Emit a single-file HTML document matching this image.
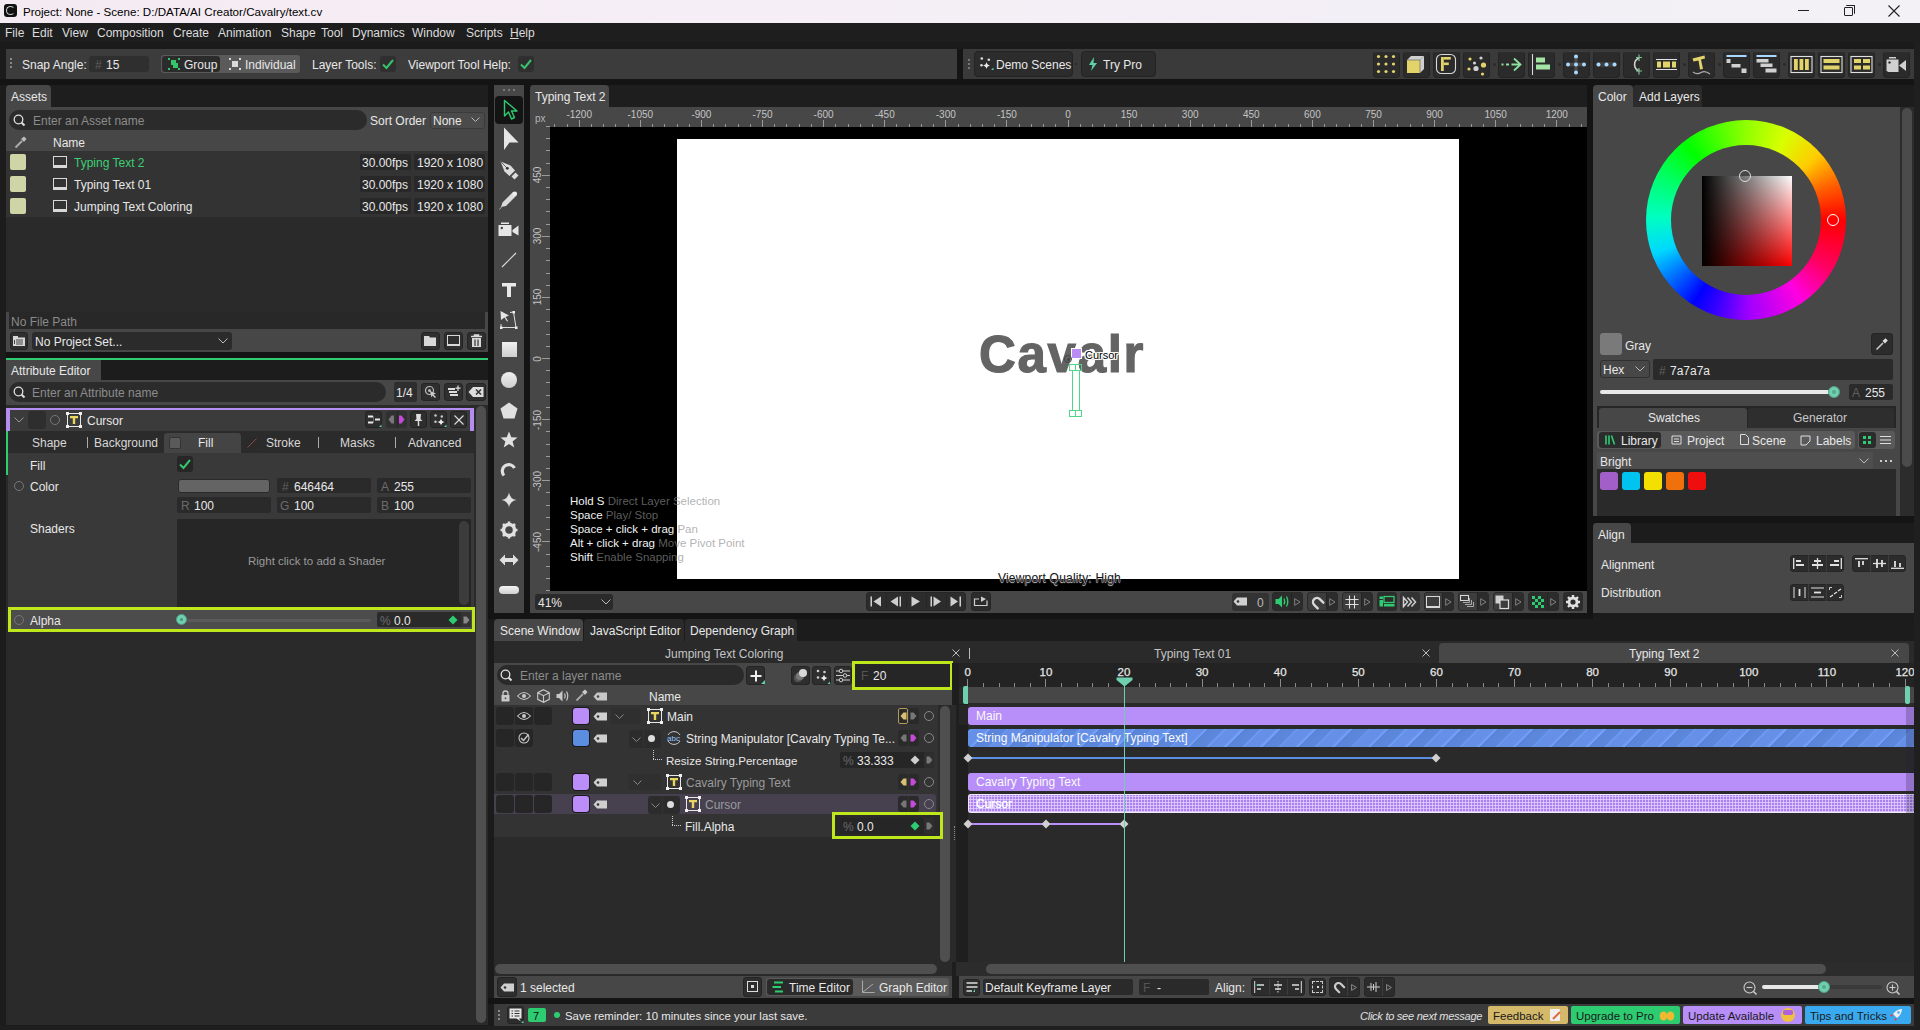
<!DOCTYPE html>
<html><head><meta charset="utf-8">
<style>
*{box-sizing:border-box;margin:0;padding:0}
html,body{width:1920px;height:1030px;overflow:hidden;background:#1b1b1b;font-family:"Liberation Sans",sans-serif;font-size:12px;color:#e6e6e6}
.a{position:absolute}
.t{position:absolute;white-space:nowrap;line-height:14px;margin-top:1px}
.dim{color:#8a8a8a}
svg{position:absolute;overflow:visible}
</style></head><body>


<!-- TITLE BAR -->
<div class="a" style="left:0;top:0;width:1920px;height:23px;background:linear-gradient(90deg,#f4eaf2 0%,#f6eef6 35%,#f3eff6 70%,#f3f0f6 100%)"></div>
<div class="a" style="left:4px;top:4px;width:13px;height:13px;background:#111;border-radius:3px"></div>
<div class="a" style="left:6px;top:6px;width:9px;height:9px;border:1.5px solid #ccc;border-right-color:transparent;border-radius:50%"></div>
<div class="t" style="left:23px;top:4px;color:#000;font-size:11.6px">Project: None - Scene: D:/DATA/AI Creator/Cavalry/text.cv</div>
<div class="a" style="left:1798px;top:10px;width:11px;height:1px;background:#222"></div>
<div class="a" style="left:1844px;top:7px;width:9px;height:9px;border:1px solid #222;border-radius:1px"></div>
<div class="a" style="left:1846px;top:5px;width:9px;height:9px;border-top:1px solid #222;border-right:1px solid #222;border-radius:1px"></div>
<svg style="left:1888px;top:5px" width="12" height="12"><path d="M0.5 0.5L11.5 11.5M11.5 0.5L0.5 11.5" stroke="#222" stroke-width="1.1"/></svg>

<!-- MENU BAR -->
<div class="a" style="left:0;top:23px;width:1920px;height:19px;background:#1e1e1e"></div>
<div class="a" style="left:0;top:42px;width:1920px;height:7px;background:#1b1b1b"></div>
<div class="t" style="left:5px;top:25px;color:#dcdcdc">File</div>
<div class="t" style="left:32px;top:25px;color:#dcdcdc">Edit</div>
<div class="t" style="left:62px;top:25px;color:#dcdcdc">View</div>
<div class="t" style="left:97px;top:25px;color:#dcdcdc">Composition</div>
<div class="t" style="left:173px;top:25px;color:#dcdcdc">Create</div>
<div class="t" style="left:218px;top:25px;color:#dcdcdc">Animation</div>
<div class="t" style="left:281px;top:25px;color:#dcdcdc">Shape</div>
<div class="t" style="left:321px;top:25px;color:#dcdcdc">Tool</div>
<div class="t" style="left:352px;top:25px;color:#dcdcdc">Dynamics</div>
<div class="t" style="left:412px;top:25px;color:#dcdcdc">Window</div>
<div class="t" style="left:466px;top:25px;color:#dcdcdc">Scripts</div>
<div class="t" style="left:510px;top:25px;color:#dcdcdc"><u>H</u>elp</div>

<!-- TOOLBAR LEFT -->
<div class="a" style="left:6px;top:49px;width:951px;height:30px;background:#3c3c3c"></div>
<div class="a" style="left:10px;top:58px;width:2px;height:2px;background:#888;box-shadow:0 4px #888,0 8px #888"></div>
<div class="t" style="left:22px;top:57px;color:#e8e8e8">Snap Angle:</div>
<div class="a" style="left:89px;top:56px;width:60px;height:16px;background:#2f2f2f;border-radius:3px"></div>
<div class="t" style="left:95px;top:57px;color:#5e5e5e">#</div>
<div class="t" style="left:106px;top:57px;color:#e8e8e8">15</div>
<div class="a" style="left:161px;top:55px;width:139px;height:18px;background:#5a5a5a;border-radius:3px"></div>
<div class="a" style="left:162px;top:56px;width:58px;height:16px;background:#2b2b2b;border-radius:3px"></div>
<div class="a" style="left:168px;top:58px;width:12px;height:12px">
 <div class="a" style="left:3px;top:2px;width:5px;height:5px;background:#35c46a"></div><div class="a" style="left:5px;top:5px;width:5px;height:5px;background:#35c46a"></div>
 <div class="a" style="left:0;top:0;width:2px;height:2px;background:#35c46a"></div><div class="a" style="left:10px;top:0;width:2px;height:2px;background:#35c46a"></div>
 <div class="a" style="left:0;top:10px;width:2px;height:2px;background:#35c46a"></div><div class="a" style="left:10px;top:10px;width:2px;height:2px;background:#35c46a"></div>
</div>
<div class="t" style="left:184px;top:57px;color:#e8e8e8">Group</div>
<div class="a" style="left:229px;top:58px;width:12px;height:12px">
 <div class="a" style="left:3px;top:3px;width:6px;height:6px;background:#d8d8d8"></div>
 <div class="a" style="left:0;top:0;width:2px;height:2px;background:#d8d8d8"></div><div class="a" style="left:10px;top:0;width:2px;height:2px;background:#d8d8d8"></div>
 <div class="a" style="left:0;top:10px;width:2px;height:2px;background:#d8d8d8"></div><div class="a" style="left:10px;top:10px;width:2px;height:2px;background:#d8d8d8"></div>
</div>
<div class="t" style="left:245px;top:57px;color:#e8e8e8">Individual</div>
<div class="t" style="left:312px;top:57px;color:#e8e8e8">Layer Tools:</div>
<div class="a" style="left:380px;top:56px;width:16px;height:16px;background:#2f2f2f;border-radius:3px"></div>
<svg style="left:382px;top:59px" width="12" height="10"><path d="M1 5.5L4.5 9L11 1" stroke="#35c46a" stroke-width="2" fill="none"/></svg>
<div class="t" style="left:408px;top:57px;color:#e8e8e8">Viewport Tool Help:</div>
<div class="a" style="left:518px;top:56px;width:16px;height:16px;background:#2f2f2f;border-radius:3px"></div>
<svg style="left:520px;top:59px" width="12" height="10"><path d="M1 5.5L4.5 9L11 1" stroke="#35c46a" stroke-width="2" fill="none"/></svg>

<!-- TOOLBAR RIGHT -->
<div class="a" style="left:957px;top:49px;width:6px;height:30px;background:#151515"></div>
<div class="a" style="left:963px;top:49px;width:951px;height:30px;background:#3a3a3a"></div>
<div class="a" style="left:968px;top:59px;width:2px;height:2px;background:#777;box-shadow:0 4px #777,0 8px #777"></div>
<div class="a" style="left:974px;top:51px;width:99px;height:26px;background:#2c2c2c;border:1px solid #232323;border-radius:4px"></div>

<svg style="left:979px;top:56px" width="16" height="16"><circle cx="2.8" cy="2.5" r="1.3" fill="#ddd"/><circle cx="9.8" cy="3.8" r="1.3" fill="#ddd"/><circle cx="2.5" cy="9.2" r="1.3" fill="#ddd"/><path d="M7.5 6Q8 9 11 9.5Q8 10 7.5 13Q7 10 4 9.5Q7 9 7.5 6Z" fill="#eee"/><path d="M12 14L14.5 11.5V14Z" fill="#5fd0a8"/></svg>
<div class="t" style="left:996px;top:57px;color:#e8e8e8">Demo Scenes</div>
<div class="a" style="left:1075px;top:63px;width:2px;height:2px;background:#262626;border-radius:1px"></div>
<div class="a" style="left:1081px;top:51px;width:75px;height:26px;background:#2c2c2c;border:1px solid #232323;border-radius:4px"></div>
<svg style="left:1088px;top:57px" width="10" height="15"><path d="M6 0L1 8H4.5L3 14L9 6H5.5Z" fill="#5fd0a8"/></svg>
<div class="t" style="left:1103px;top:57px;color:#e8e8e8">Try Pro</div>


<div class="a" style="left:0;top:79px;width:1914px;height:6px;background:#141414"></div>
<div class="a" style="left:1914px;top:42px;width:6px;height:988px;background:#1f1f1f"></div>
<!-- RIGHT TOOLBAR ICONS -->
<div class="a" style="left:1373px;top:51px;width:27px;height:27px;background:#2b2b2b;border:1px solid #242424;border-top-color:#3c3c3c;border-radius:4px"></div>
<div class="a" style="left:1403px;top:51px;width:27px;height:27px;background:#2b2b2b;border:1px solid #242424;border-top-color:#3c3c3c;border-radius:4px"></div>
<div class="a" style="left:1433px;top:51px;width:27px;height:27px;background:#2b2b2b;border:1px solid #242424;border-top-color:#3c3c3c;border-radius:4px"></div>
<div class="a" style="left:1463px;top:51px;width:27px;height:27px;background:#2b2b2b;border:1px solid #242424;border-top-color:#3c3c3c;border-radius:4px"></div>
<div class="a" style="left:1498px;top:51px;width:27px;height:27px;background:#2b2b2b;border:1px solid #242424;border-top-color:#3c3c3c;border-radius:4px"></div>
<div class="a" style="left:1528px;top:51px;width:27px;height:27px;background:#2b2b2b;border:1px solid #242424;border-top-color:#3c3c3c;border-radius:4px"></div>
<div class="a" style="left:1563px;top:51px;width:27px;height:27px;background:#2b2b2b;border:1px solid #242424;border-top-color:#3c3c3c;border-radius:4px"></div>
<div class="a" style="left:1593px;top:51px;width:27px;height:27px;background:#2b2b2b;border:1px solid #242424;border-top-color:#3c3c3c;border-radius:4px"></div>
<div class="a" style="left:1623px;top:51px;width:27px;height:27px;background:#2b2b2b;border:1px solid #242424;border-top-color:#3c3c3c;border-radius:4px"></div>
<div class="a" style="left:1653px;top:51px;width:27px;height:27px;background:#2b2b2b;border:1px solid #242424;border-top-color:#3c3c3c;border-radius:4px"></div>
<div class="a" style="left:1688px;top:51px;width:27px;height:27px;background:#2b2b2b;border:1px solid #242424;border-top-color:#3c3c3c;border-radius:4px"></div>
<div class="a" style="left:1723px;top:51px;width:27px;height:27px;background:#2b2b2b;border:1px solid #242424;border-top-color:#3c3c3c;border-radius:4px"></div>
<div class="a" style="left:1753px;top:51px;width:27px;height:27px;background:#2b2b2b;border:1px solid #242424;border-top-color:#3c3c3c;border-radius:4px"></div>
<div class="a" style="left:1788px;top:51px;width:27px;height:27px;background:#2b2b2b;border:1px solid #242424;border-top-color:#3c3c3c;border-radius:4px"></div>
<div class="a" style="left:1818px;top:51px;width:27px;height:27px;background:#2b2b2b;border:1px solid #242424;border-top-color:#3c3c3c;border-radius:4px"></div>
<div class="a" style="left:1848px;top:51px;width:27px;height:27px;background:#2b2b2b;border:1px solid #242424;border-top-color:#3c3c3c;border-radius:4px"></div>
<div class="a" style="left:1883px;top:51px;width:27px;height:27px;background:#2b2b2b;border:1px solid #242424;border-top-color:#3c3c3c;border-radius:4px"></div>
<div class="a" style="left:1492.5px;top:63px;width:3px;height:3px;background:#2a2a2a;border-radius:50%"></div>
<div class="a" style="left:1557.5px;top:63px;width:3px;height:3px;background:#2a2a2a;border-radius:50%"></div>
<div class="a" style="left:1682.5px;top:63px;width:3px;height:3px;background:#2a2a2a;border-radius:50%"></div>
<div class="a" style="left:1717.5px;top:63px;width:3px;height:3px;background:#2a2a2a;border-radius:50%"></div>
<div class="a" style="left:1782.5px;top:63px;width:3px;height:3px;background:#2a2a2a;border-radius:50%"></div>
<div class="a" style="left:1877.5px;top:63px;width:3px;height:3px;background:#2a2a2a;border-radius:50%"></div>
<svg style="left:1373px;top:51px" width="27" height="27"><circle cx="5.5" cy="5.5" r="1.6" fill="#e3d36b"/><circle cx="5.5" cy="13.0" r="1.6" fill="#e3d36b"/><circle cx="5.5" cy="20.5" r="1.6" fill="#e3d36b"/><circle cx="13.0" cy="5.5" r="1.6" fill="#e3d36b"/><circle cx="13.0" cy="13.0" r="1.6" fill="#e3d36b"/><circle cx="13.0" cy="20.5" r="1.6" fill="#e3d36b"/><circle cx="20.5" cy="5.5" r="1.6" fill="#e3d36b"/><circle cx="20.5" cy="13.0" r="1.6" fill="#e3d36b"/><circle cx="20.5" cy="20.5" r="1.6" fill="#e3d36b"/></svg>
<svg style="left:1403px;top:51px" width="27" height="27"><path d="M4 9L8 5H21L17 9Z" fill="#d0d0d0"/><path d="M17 9L21 5V18L17 22Z" fill="#d0d0d0"/><rect x="4" y="9" width="13" height="13" fill="#e3d36b"/><path d="M4 9H17V22" stroke="#555" stroke-width="0.6" fill="none"/></svg>
<svg style="left:1433px;top:51px" width="27" height="27"><rect x="3.5" y="3.5" width="19" height="19" rx="5" stroke="#d8d8d8" stroke-width="1.1" fill="none"/><rect x="8" y="6" width="2.8" height="14" fill="#e3d36b"/><rect x="10.8" y="6" width="7" height="2.6" fill="#e3d36b"/><rect x="10.8" y="11.5" width="5" height="2.6" fill="#e3d36b"/></svg>
<svg style="left:1463px;top:51px" width="27" height="27"><circle cx="7" cy="8" r="1.6" fill="#e3d36b"/><circle cx="18" cy="7" r="1.6" fill="#d0d0d0"/><circle cx="11.5" cy="12" r="1.6" fill="#d0d0d0"/><circle cx="20.5" cy="14" r="2.6" fill="#e3d36b"/><circle cx="6" cy="18" r="1.6" fill="#e3d36b"/><circle cx="13" cy="17.5" r="2.6" fill="#d0d0d0"/><circle cx="19.5" cy="23" r="1.6" fill="#e3d36b"/></svg>
<svg style="left:1498px;top:51px" width="27" height="27"><path d="M3.5 13.5H5.5M8 13.5H11M13.5 13.5H22" stroke="#8ee0a0" stroke-width="1.8"/><path d="M16 7.5L22.5 13.5L16 19.5" stroke="#8ee0a0" stroke-width="1.8" fill="none"/></svg>
<svg style="left:1528px;top:51px" width="27" height="27"><path d="M4.5 3V24" stroke="#d8d8d8" stroke-width="1.1"/><rect x="8" y="6.5" width="9" height="5" fill="#a4e4a4"/><rect x="8" y="13.5" width="14" height="5" fill="#a4e4a4"/></svg>
<svg style="left:1563px;top:51px" width="27" height="27"><path d="M13 5V22M4.5 13.5H21.5" stroke="#4a4a4a" stroke-width="3.5"/><circle cx="13" cy="5.5" r="2" fill="#a8d8ff"/><circle cx="13" cy="13.5" r="2" fill="#a8d8ff"/><circle cx="13" cy="21.5" r="2" fill="#a8d8ff"/><circle cx="5" cy="13.5" r="2" fill="#a8d8ff"/><circle cx="21" cy="13.5" r="2" fill="#a8d8ff"/></svg>
<svg style="left:1593px;top:51px" width="27" height="27"><rect x="3" y="11" width="21" height="5" rx="2.5" fill="#3e3e3e"/><circle cx="5.5" cy="13.5" r="2" fill="#a8d8ff"/><circle cx="13.5" cy="13.5" r="2" fill="#a8d8ff"/><circle cx="21.5" cy="13.5" r="2" fill="#a8d8ff"/></svg>
<svg style="left:1623px;top:51px" width="27" height="27"><path d="M16 7A7 7 0 0 0 16 20" stroke="#d0d0d0" stroke-width="1.6" fill="none"/><path d="M16 3.5V10M13 6.5H19M16 17V23.5M13 20H19" stroke="#7cc08a" stroke-width="1.2"/></svg>
<svg style="left:1653px;top:51px" width="27" height="27"><path d="M3 8.5H24M3 18.5H24" stroke="#e0e0e0" stroke-width="1.2"/><rect x="4" y="10.5" width="4" height="6" fill="#e3d36b"/><rect x="10" y="10.5" width="7" height="6" fill="#e3d36b"/><rect x="19" y="10.5" width="4" height="6" fill="#e3d36b"/></svg>
<svg style="left:1688px;top:51px" width="27" height="27"><path d="M4.5 7.5L16.5 4.5L17 7.5L13 8.5L15 18L12 18.5L10.5 9.5L5.5 10.5Z" fill="#e3d36b"/><path d="M5 21Q9 24 13 21.5T22 23" stroke="#b0b0b0" stroke-width="1.2" fill="none"/></svg>
<svg style="left:1723px;top:51px" width="27" height="27"><rect x="3.5" y="4" width="20" height="2" fill="#a8d8ff"/><rect x="3.5" y="8" width="4" height="4" fill="#d0d0d0"/><rect x="8.5" y="13" width="9" height="3.5" fill="#d0d0d0"/><rect x="18.5" y="17.5" width="5" height="4.5" fill="#d0d0d0"/></svg>
<svg style="left:1753px;top:51px" width="27" height="27"><rect x="3.5" y="4" width="20" height="2" fill="#a8d8ff"/><rect x="3.5" y="8" width="12" height="3.5" fill="#d0d0d0"/><rect x="7.5" y="12.5" width="12" height="3.5" fill="#d0d0d0"/><rect x="12.5" y="17.5" width="11" height="4" fill="#d0d0d0"/></svg>
<svg style="left:1788px;top:51px" width="27" height="27"><rect x="3" y="5.5" width="21" height="16" stroke="#e0e0e0" stroke-width="1.1" fill="none"/><rect x="6" y="8" width="3.8" height="11" fill="#e3d36b"/><rect x="11.5" y="8" width="3.8" height="11" fill="#e3d36b"/><rect x="17" y="8" width="3.8" height="11" fill="#e3d36b"/></svg>
<svg style="left:1818px;top:51px" width="27" height="27"><rect x="3" y="5.5" width="21" height="16" stroke="#e0e0e0" stroke-width="1.1" fill="none"/><rect x="5.5" y="8" width="16" height="4" fill="#e3d36b"/><rect x="5.5" y="14.5" width="16" height="4" fill="#e3d36b"/></svg>
<svg style="left:1848px;top:51px" width="27" height="27"><rect x="3" y="5.5" width="21" height="16" stroke="#e0e0e0" stroke-width="1.1" fill="none"/><rect x="6" y="8" width="7" height="4" fill="#e3d36b"/><rect x="15" y="8" width="7" height="4" fill="#e3d36b"/><rect x="6" y="14.5" width="7" height="4" fill="#e3d36b"/><rect x="15" y="14.5" width="7" height="4" fill="#e3d36b"/></svg>
<svg style="left:1883px;top:51px" width="27" height="27"><path d="M3.5 8.5H15.5V21H5L3.5 19.5Z" fill="#d0d0d0"/><rect x="6" y="6" width="7" height="1.5" fill="#d0d0d0"/><path d="M16 14.5L23 9V20Z" fill="#d0d0d0"/><circle cx="6.5" cy="11.5" r="1.2" fill="#333"/></svg>
<!-- LEFT PANEL: ASSETS -->
<div class="a" style="left:0;top:85px;width:6px;height:945px;background:#1c1c1c"></div>
<div class="a" style="left:6px;top:85px;width:482px;height:22px;background:#1e1e1e"></div>
<div class="a" style="left:6px;top:85px;width:45px;height:22px;background:#474747;border-radius:4px 4px 0 0"></div>
<div class="t" style="left:11px;top:89px;color:#e8e8e8">Assets</div>
<div class="a" style="left:6px;top:107px;width:482px;height:44px;background:#474747"></div>
<div class="a" style="left:9px;top:110px;width:358px;height:20px;background:#2b2b2b;border-radius:10px"></div>
<svg style="left:13px;top:114px" width="13" height="13"><circle cx="5.5" cy="5.5" r="4.3" stroke="#e0e0e0" stroke-width="1.3" fill="none"/><path d="M8.7 8.7L11.5 11.5" stroke="#e0e0e0" stroke-width="2"/></svg>
<div class="t" style="left:33px;top:113px;color:#8c8c8c">Enter an Asset name</div>
<div class="t" style="left:370px;top:113px;color:#e8e8e8">Sort Order</div>
<div class="a" style="left:430px;top:112px;width:55px;height:17px;background:#4b4b4b;border:1px solid #3a3a3a;border-radius:3px"></div>
<div class="t" style="left:433px;top:113px;color:#e8e8e8">None</div>
<svg style="left:471px;top:117px" width="9" height="6"><path d="M0.5 0.5L4.5 4.5L8.5 0.5" stroke="#bbb" fill="none"/></svg>
<svg style="left:14px;top:136px" width="13" height="13"><path d="M1.5 11.5L8 5" stroke="#aaa" stroke-width="2"/><path d="M7 3L10 0.5L12.5 3L10 6Z" fill="#bbb"/></svg>
<div class="t" style="left:53px;top:135px;color:#e8e8e8">Name</div>
<div class="a" style="left:6px;top:151px;width:482px;height:66px;background:#333333"></div>
<div class="a" style="left:10px;top:154px;width:16px;height:16px;background:#cfd5a6;border-radius:2px"></div>
<div class="a" style="left:10px;top:176px;width:16px;height:16px;background:#cfd5a6;border-radius:2px"></div>
<div class="a" style="left:10px;top:198px;width:16px;height:16px;background:#cfd5a6;border-radius:2px"></div>
<div class="a" style="left:53px;top:156px;width:14px;height:12px;border:1.3px solid #d8d8d8;border-bottom-width:3px"></div>
<div class="a" style="left:53px;top:178px;width:14px;height:12px;border:1.3px solid #d8d8d8;border-bottom-width:3px"></div>
<div class="a" style="left:53px;top:200px;width:14px;height:12px;border:1.3px solid #d8d8d8;border-bottom-width:3px"></div>
<div class="t" style="left:74px;top:155px;color:#3ccf74">Typing Text 2</div>
<div class="t" style="left:74px;top:177px;color:#e8e8e8">Typing Text 01</div>
<div class="t" style="left:74px;top:199px;color:#e8e8e8">Jumping Text Coloring</div>
<div class="a" style="left:360px;top:154px;width:51px;height:16px;background:#282828;border-radius:2px"></div>
<div class="a" style="left:414px;top:154px;width:71px;height:16px;background:#282828;border-radius:2px"></div>
<div class="a" style="left:360px;top:176px;width:51px;height:16px;background:#282828;border-radius:2px"></div>
<div class="a" style="left:414px;top:176px;width:71px;height:16px;background:#282828;border-radius:2px"></div>
<div class="a" style="left:360px;top:198px;width:51px;height:16px;background:#282828;border-radius:2px"></div>
<div class="a" style="left:414px;top:198px;width:71px;height:16px;background:#282828;border-radius:2px"></div>
<div class="t" style="left:362px;top:155px;color:#e8e8e8">30.00fps</div><div class="t" style="left:417px;top:155px;color:#e8e8e8">1920 x 1080</div>
<div class="t" style="left:362px;top:177px;color:#e8e8e8">30.00fps</div><div class="t" style="left:417px;top:177px;color:#e8e8e8">1920 x 1080</div>
<div class="t" style="left:362px;top:199px;color:#e8e8e8">30.00fps</div><div class="t" style="left:417px;top:199px;color:#e8e8e8">1920 x 1080</div>
<div class="a" style="left:6px;top:217px;width:482px;height:95px;background:#2a2a2a"></div>
<div class="a" style="left:6px;top:312px;width:482px;height:40px;background:#474747"></div>
<div class="a" style="left:9px;top:312px;width:476px;height:17px;background:#282828"></div>
<div class="t" style="left:11px;top:314px;color:#8a8a8a">No File Path</div>
<div class="a" style="left:10px;top:332px;width:18px;height:18px;background:#2f2f2f;border:1px solid #242424;border-radius:3px"></div>
<svg style="left:12px;top:335px" width="14" height="12"><path d="M1 1H6V2.5H13V11H1Z" fill="#d8d8d8"/><path d="M4 5H11M4 7H11M4 9H11M2.5 5V9" stroke="#444" stroke-width="1"/></svg>
<div class="a" style="left:32px;top:332px;width:200px;height:18px;background:#2b2b2b;border-radius:3px"></div>
<div class="t" style="left:35px;top:334px;color:#e8e8e8">No Project Set...</div>
<svg style="left:218px;top:338px" width="10" height="6"><path d="M0.5 0.5L5 5L9.5 0.5" stroke="#bbb" fill="none"/></svg>
<div class="a" style="left:421px;top:332px;width:19px;height:18px;background:#2f2f2f;border:1px solid #242424;border-radius:3px"></div>
<svg style="left:423px;top:335px" width="14" height="12"><path d="M1 1H6L7 2.5H13V11H1Z" fill="#d8d8d8"/></svg>
<div class="a" style="left:444px;top:332px;width:19px;height:18px;background:#2f2f2f;border:1px solid #242424;border-radius:3px"></div>
<div class="a" style="left:447px;top:335px;width:13px;height:11px;border:1.5px solid #d8d8d8;border-bottom-width:2.5px"></div>
<div class="a" style="left:467px;top:332px;width:19px;height:18px;background:#2f2f2f;border:1px solid #242424;border-radius:3px"></div>
<svg style="left:470px;top:334px" width="13" height="14"><path d="M1 2.5H12M4.5 2.5V1H8.5V2.5" stroke="#d8d8d8" stroke-width="1.5" fill="none"/><path d="M2 4H11V13H2Z" fill="#d8d8d8"/><path d="M5 5.5V12M8 5.5V12" stroke="#333" stroke-width="1.2"/></svg>
<div class="a" style="left:6px;top:352px;width:482px;height:6px;background:#141414"></div>
<div class="a" style="left:6px;top:358px;width:482px;height:2px;background:#2ecc71"></div>

<!-- ATTRIBUTE EDITOR -->
<div class="a" style="left:6px;top:360px;width:482px;height:20px;background:#1c1c1c"></div>
<div class="a" style="left:6px;top:360px;width:95px;height:20px;background:#474747"></div>
<div class="t" style="left:11px;top:363px;color:#e8e8e8">Attribute Editor</div>
<div class="a" style="left:6px;top:380px;width:482px;height:25px;background:#474747"></div>
<div class="a" style="left:9px;top:382px;width:377px;height:20px;background:#2b2b2b;border-radius:10px"></div>
<svg style="left:13px;top:386px" width="13" height="13"><circle cx="5.5" cy="5.5" r="4.3" stroke="#e0e0e0" stroke-width="1.3" fill="none"/><path d="M8.7 8.7L11.5 11.5" stroke="#e0e0e0" stroke-width="2"/></svg>
<div class="t" style="left:32px;top:385px;color:#8c8c8c">Enter an Attribute name</div>
<div class="a" style="left:394px;top:382px;width:23px;height:20px;background:#2e2e2e;border-radius:2px"></div>
<div class="t" style="left:396px;top:385px;color:#e8e8e8">1/4</div>
<div class="a" style="left:421px;top:383px;width:19px;height:18px;background:#2f2f2f;border:1px solid #242424;border-radius:3px"></div>
<svg style="left:424px;top:385px" width="14" height="14"><circle cx="5.5" cy="5.5" r="4" stroke="#bbb" stroke-width="1.2" fill="none"/><circle cx="5.5" cy="5.5" r="1.5" fill="#bbb"/><path d="M6 6L12 8.5L9.5 9.5L12 12L11 13L8.5 10.5L7.5 12.5Z" fill="#ccc"/></svg>
<div class="a" style="left:444px;top:383px;width:19px;height:18px;background:#2f2f2f;border:1px solid #242424;border-radius:3px"></div>
<svg style="left:447px;top:385px" width="14" height="13"><path d="M1 4H8M2 7H10M3 10H11" stroke="#ddd" stroke-width="1.8"/><path d="M11 0.5V6M8.5 3.2H13.5" stroke="#ddd" stroke-width="1.2"/></svg>
<div class="a" style="left:466px;top:383px;width:20px;height:18px;background:#2f2f2f;border:1px solid #242424;border-radius:3px"></div>
<svg style="left:468px;top:386px" width="16" height="12"><path d="M0.5 6L5 1H15.5V11H5Z" fill="#ddd"/><path d="M8 3.5L13 8.5M13 3.5L8 8.5" stroke="#333" stroke-width="1.6"/></svg>

<div class="a" style="left:6px;top:405px;width:470px;height:620px;background:#2a2a2a"></div>
<div class="a" style="left:476px;top:405px;width:12px;height:620px;background:#2a2a2a"></div>
<div class="a" style="left:476px;top:406px;width:10px;height:617px;background:#4f4f4f;border-radius:5px"></div>
<div class="a" style="left:0;top:1026px;width:494px;height:4px;background:#1e1e1e"></div>
<!-- cursor header -->
<div class="a" style="left:6px;top:408px;width:468px;height:23px;background:#3b3b3b;border-top:2px solid #b58cf0;border-left:4px solid #b58cf0;border-right:4px solid #b58cf0"></div>
<svg style="left:14px;top:417px" width="10" height="6"><path d="M0.5 0.5L5 5L9.5 0.5" stroke="#999" fill="none"/></svg>
<div class="a" style="left:28px;top:411px;width:18px;height:18px;background:#2e2e2e;border-radius:3px"></div>
<div class="a" style="left:50px;top:415px;width:10px;height:10px;border:1.2px solid #777;border-radius:50%"></div>
<svg style="left:66px;top:412px" width="16" height="16" viewBox="0 0 16 16"><rect x="1.5" y="1.5" width="13" height="13" stroke="#e8e8e8" stroke-width="1" fill="none"/><rect x="0" y="0" width="3" height="3" fill="#f0f0f0"/><rect x="13" y="0" width="3" height="3" fill="#f0f0f0"/><rect x="0" y="13" width="3" height="3" fill="#f0f0f0"/><rect x="13" y="13" width="3" height="3" fill="#f0f0f0"/><path d="M4 4H12V6.3H9.2V12H6.8V6.3H4Z" fill="#e8d660"/></svg>

<div class="t" style="left:87px;top:413px;color:#e8e8e8">Cursor</div>
<div class="a" style="left:365px;top:411px;width:17px;height:17px;background:#2e2e2e;border:1px solid #232323;border-radius:3px"></div>
<svg style="left:366px;top:412px" width="16" height="16"><rect x="2" y="3.5" width="5" height="2" fill="#e8e8e8"/><rect x="2" y="9.5" width="5" height="2" fill="#e8e8e8"/><rect x="9" y="6.5" width="5" height="2" fill="#e8e8e8"/><path d="M7.5 4V11" stroke="#777" stroke-width="0.8"/><path d="M13 15L15.5 12.5V15Z" fill="#5fd0a8"/></svg>
<div class="a" style="left:386px;top:411px;width:21px;height:17px;background:#303030;border-radius:3px"></div>
<div class="a" style="left:397px;top:411px;width:1px;height:17px;background:#262626"></div><svg style="left:388px;top:415px" width="17" height="9"><path d="M6 0.5V8.5H3.5L0.5 4.5L3.5 0.5Z" fill="#777"/><path d="M11 0.5H13.5L16.5 4.5L13.5 8.5H11Z" fill="#c44bd8"/></svg>
<div class="a" style="left:410px;top:411px;width:17px;height:17px;background:#2e2e2e;border:1px solid #232323;border-radius:3px"></div>
<svg style="left:413px;top:413px" width="11" height="14"><path d="M3 1H8L7.5 6L9.5 8H1.5L3.5 6Z" fill="#ddd"/><path d="M5.5 8V13" stroke="#ddd" stroke-width="1.4"/></svg>
<div class="a" style="left:430px;top:411px;width:17px;height:17px;background:#2e2e2e;border:1px solid #232323;border-radius:3px"></div>

<svg style="left:431px;top:412px" width="16" height="16"><circle cx="4.5" cy="3.5" r="1.2" fill="#ccc"/><circle cx="10.8" cy="4.5" r="1.2" fill="#ccc"/><circle cx="4.5" cy="9.8" r="1.2" fill="#ccc"/><path d="M10 6.5Q10.5 9.5 13.5 10Q10.5 10.5 10 13.5Q9.5 10.5 6.5 10Q9.5 9.5 10 6.5Z" fill="#eee"/><path d="M13 15L15.5 12.5V15Z" fill="#5fd0a8"/></svg>
<div class="a" style="left:450px;top:411px;width:17px;height:17px;background:#2e2e2e;border:1px solid #232323;border-radius:3px"></div>
<svg style="left:454px;top:415px" width="10" height="10"><path d="M0.5 0.5L9.5 9.5M9.5 0.5L0.5 9.5" stroke="#ddd" stroke-width="1.1"/></svg>
<!-- tabs -->
<div class="a" style="left:6px;top:431px;width:468px;height:22px;background:#2b2b2b"></div>
<div class="a" style="left:6px;top:431px;width:1.5px;height:44px;background:#2ecc71"></div>
<div class="t" style="left:32px;top:435px;color:#d8d8d8">Shape</div>
<div class="a" style="left:87px;top:437px;width:1px;height:11px;background:#aaa"></div>
<div class="t" style="left:94px;top:435px;color:#d8d8d8">Background</div>
<div class="a" style="left:164px;top:433px;width:77px;height:20px;background:#444444;border-radius:3px 3px 0 0"></div>
<div class="a" style="left:169px;top:437px;width:12px;height:12px;background:#5a5a5a;border:1px solid #333;border-radius:2px"></div>
<div class="t" style="left:198px;top:435px;color:#e8e8e8">Fill</div>
<div class="a" style="left:246px;top:437px;width:12px;height:12px;background:#2a2a2a;border-radius:2px"></div>
<svg style="left:247px;top:438px" width="10" height="10"><path d="M0.5 9.5L9.5 0.5" stroke="#8a4848" stroke-width="1"/></svg>
<div class="t" style="left:266px;top:435px;color:#d8d8d8">Stroke</div>
<div class="a" style="left:318px;top:437px;width:1px;height:11px;background:#aaa"></div>
<div class="t" style="left:340px;top:435px;color:#d8d8d8">Masks</div>
<div class="a" style="left:395px;top:437px;width:1px;height:11px;background:#aaa"></div>
<div class="t" style="left:408px;top:435px;color:#d8d8d8">Advanced</div>
<!-- body -->
<div class="a" style="left:7.5px;top:453px;width:466px;height:154px;background:#393939"></div>
<div class="t" style="left:30px;top:458px;color:#e8e8e8">Fill</div>
<div class="a" style="left:177px;top:456px;width:16px;height:16px;background:#262626;border-radius:3px"></div>
<svg style="left:179px;top:459px" width="12" height="10"><path d="M1 5.5L4.5 9L11 1" stroke="#35c46a" stroke-width="2" fill="none"/></svg>
<div class="a" style="left:14px;top:481px;width:10px;height:10px;border:1.2px solid #777;border-radius:50%"></div>
<div class="t" style="left:30px;top:479px;color:#e8e8e8">Color</div>
<div class="a" style="left:177.5px;top:478.5px;width:92.5px;height:14.5px;background:#646464;border:1px solid #2a2a2a;border-radius:3px"></div>
<div class="a" style="left:277px;top:478px;width:94px;height:15px;background:#2a2a2a;border-radius:2px"></div>
<div class="t" style="left:282px;top:479px;color:#5f5f5f">#</div><div class="t" style="left:294px;top:479px;color:#e8e8e8">646464</div>
<div class="a" style="left:377px;top:478px;width:94px;height:15px;background:#2a2a2a;border-radius:2px"></div>
<div class="t" style="left:381px;top:479px;color:#6a6a6a">A</div><div class="t" style="left:394px;top:479px;color:#e8e8e8">255</div>
<div class="a" style="left:177px;top:497px;width:94px;height:15.5px;background:#2a2a2a;border-radius:2px"></div>
<div class="t" style="left:181px;top:498px;color:#6a6a6a">R</div><div class="t" style="left:194px;top:498px;color:#e8e8e8">100</div>
<div class="a" style="left:277px;top:497px;width:94px;height:15.5px;background:#2a2a2a;border-radius:2px"></div>
<div class="t" style="left:280px;top:498px;color:#6a6a6a">G</div><div class="t" style="left:294px;top:498px;color:#e8e8e8">100</div>
<div class="a" style="left:377px;top:497px;width:94px;height:15.5px;background:#2a2a2a;border-radius:2px"></div>
<div class="t" style="left:381px;top:498px;color:#6a6a6a">B</div><div class="t" style="left:394px;top:498px;color:#e8e8e8">100</div>
<div class="t" style="left:30px;top:521px;color:#e8e8e8">Shaders</div>
<div class="a" style="left:177px;top:519px;width:294px;height:88px;background:#262626"></div>
<div class="a" style="left:459px;top:521px;width:10px;height:84px;background:#3c3c3c;border-radius:5px"></div>
<div class="t" style="left:248px;top:553px;color:#9a9a9a;font-size:11.5px">Right click to add a Shader</div>
<!-- alpha -->
<div class="a" style="left:8px;top:607px;width:467px;height:25px;border:3px solid #bfe81c;background:#4c4c4c"></div>
<div class="a" style="left:14px;top:615px;width:10px;height:10px;border:1.2px solid #777;border-radius:50%"></div>
<div class="t" style="left:30px;top:613px;color:#e8e8e8">Alpha</div>
<div class="a" style="left:187px;top:619px;width:184px;height:3px;background:#5a5a5a;border-radius:2px"></div>
<div class="a" style="left:176px;top:614px;width:11px;height:11px;background:#6fcfae;border:1px solid #4f9f86;border-radius:50%"></div>
<div class="a" style="left:180px;top:618px;width:3px;height:3px;background:#4a8f7a;border-radius:50%"></div>
<div class="a" style="left:377px;top:612px;width:94px;height:15px;background:#2a2a2a;border-radius:2px"></div>
<div class="t" style="left:380px;top:613px;color:#6a6a6a">%</div><div class="t" style="left:394px;top:613px;color:#e8e8e8">0.0</div>
<svg style="left:448px;top:615px" width="10" height="10"><path d="M5 0.5L9.5 5L5 9.5L0.5 5Z" fill="#2ecc71"/></svg>
<div class="a" style="left:461px;top:612px;width:10px;height:15px;background:#333"></div>
<svg style="left:463px;top:616px" width="7" height="8"><path d="M0.5 0.5H3.5L6.5 4L3.5 7.5H0.5Z" fill="#888"/></svg>

<!-- VIEWPORT -->
<div class="a" style="left:488px;top:85px;width:6px;height:534px;background:#141414"></div>
<div class="a" style="left:494px;top:85px;width:30px;height:528px;background:#474747"></div>
<div class="a" style="left:503px;top:89px;width:2px;height:2px;background:#7a7a7a;box-shadow:5px 0 #7a7a7a,10px 0 #7a7a7a"></div>
<div class="a" style="left:495px;top:96px;width:28px;height:28px;background:#141414;border-radius:4px"></div>
<svg style="left:503px;top:99px" width="16" height="22"><path d="M1.5 1.5V17L5.5 13L8.5 20L11.5 18.5L8.5 12H14Z" stroke="#2ecc71" stroke-width="1.4" fill="none" stroke-linejoin="round"/></svg>
<svg style="left:503px;top:127px" width="17" height="24"><path d="M1 0.5V23L6.5 15.5H15.5Z" fill="#e6e6e6"/></svg>
<svg style="left:500px;top:161px" width="19" height="19"><path d="M0.5 0.5L10.5 4.5L15 9.5L9.5 15L4.5 10.5Z" fill="#dcdcdc"/><path d="M0.5 0.5L7 7" stroke="#666" stroke-width="1"/><circle cx="7.3" cy="7.3" r="1.4" fill="#333"/><path d="M11.5 15.5L15.5 11.5L18.5 14.5L14.5 18.5Z" fill="#dcdcdc"/></svg>
<svg style="left:499px;top:190px" width="19" height="20"><path d="M2 17L3.5 12.5L14 2L17.5 5.5L7 16Z" fill="#dcdcdc"/><circle cx="15.8" cy="3.7" r="2.3" fill="#eee"/><path d="M0.5 19.5L2.5 17" stroke="#aaa"/></svg>
<svg style="left:498px;top:222px" width="22" height="16"><rect x="0.5" y="3" width="13" height="11" rx="0.5" fill="#e6e6e6"/><path d="M14.5 8L20.5 3.5V13.5L14.5 10Z" fill="#e6e6e6"/><rect x="3" y="0.5" width="8" height="1.5" fill="#e6e6e6"/><circle cx="3.8" cy="6" r="1.2" fill="#444"/></svg>
<svg style="left:501px;top:252px" width="16" height="16"><path d="M1 15L15 1" stroke="#d8d8d8" stroke-width="1.2"/></svg>
<svg style="left:501px;top:282px" width="16" height="16"><path d="M1 1H15V4.5H10V15H6V4.5H1Z" fill="#e8e8e8"/></svg>
<svg style="left:499px;top:310px" width="20" height="20"><path d="M1.5 1L10 5.5L6.5 7L9 11L8 11.5L5.5 7.5L2 10Z" fill="#e6e6e6"/><path d="M11 2.5L14.5 2L17 17.5H2V14" stroke="#ddd" stroke-width="1" fill="none"/><rect x="13.5" y="1" width="2.5" height="2.5" fill="#eee"/><rect x="16" y="16.5" width="2.5" height="2.5" fill="#eee"/><rect x="1" y="16.5" width="2.5" height="2.5" fill="#eee"/></svg>
<div class="a" style="left:502px;top:342px;width:15px;height:15px;background:linear-gradient(#f0f0f0,#cfcfcf)"></div>
<div class="a" style="left:501px;top:372px;width:16px;height:16px;border-radius:50%;background:linear-gradient(#f0f0f0,#cfcfcf)"></div>
<svg style="left:500px;top:402px" width="18" height="17"><path d="M9 0.5L17.5 6.5L14.5 16.5H3.5L0.5 6.5Z" fill="#e0e0e0"/></svg>
<svg style="left:500px;top:431px" width="18" height="17"><path d="M9 0.5L11.3 6.3L17.5 6.5L12.6 10.4L14.3 16.5L9 13L3.7 16.5L5.4 10.4L0.5 6.5L6.7 6.3Z" fill="#e0e0e0"/></svg>
<svg style="left:501px;top:462px" width="16" height="16"><path d="M3 13.5A6.5 6.5 0 1 1 13.5 6" stroke="#e0e0e0" stroke-width="3.2" fill="none"/></svg>
<svg style="left:501px;top:492px" width="16" height="16"><path d="M8 0.5Q9 7 15.5 8Q9 9 8 15.5Q7 9 0.5 8Q7 7 8 0.5Z" fill="#e0e0e0"/></svg>
<svg style="left:500px;top:521px" width="18" height="18"><circle cx="9" cy="9" r="5.5" stroke="#e0e0e0" stroke-width="3.5" fill="none"/><path d="M9 0.5V3.5M9 14.5V17.5M0.5 9H3.5M14.5 9H17.5M3 3L5 5M13 13L15 15M3 15L5 13M13 5L15 3" stroke="#e0e0e0" stroke-width="2.6"/></svg>
<svg style="left:499px;top:553px" width="20" height="14"><path d="M0.5 7L6 1.5V5H14V1.5L19.5 7L14 12.5V9H6V12.5Z" fill="#e0e0e0"/></svg>
<div class="a" style="left:499px;top:586px;width:20px;height:8px;border-radius:4px;background:linear-gradient(#f5f5f5,#cfcfcf)"></div>
<div class="a" style="left:524px;top:85px;width:6px;height:534px;background:#141414"></div>
<div class="a" style="left:530px;top:85px;width:1057px;height:22px;background:#1e1e1e"></div>
<div class="a" style="left:530px;top:85px;width:79px;height:22px;background:#474747;border-radius:4px 4px 0 0"></div>
<div class="t" style="left:535px;top:89px;color:#e8e8e8">Typing Text 2</div>
<div class="a" style="left:530px;top:107px;width:1057px;height:506px;background:#474747"></div>
<div class="t" style="left:535px;top:111px;color:#b5b5b5;font-size:10px">px</div>
<div class="a" style="left:550px;top:127px;width:1037px;height:464px;background:#000"></div>
<div class="a" style="left:677px;top:139px;width:782px;height:440px;background:#fff"></div>
<div class="a" style="left:554.3px;top:124px;width:1px;height:3px;background:#9a9a9a"></div>
<div class="a" style="left:566.5px;top:124px;width:1px;height:3px;background:#9a9a9a"></div>
<div class="a" style="left:578.7px;top:120px;width:1px;height:7px;background:#9a9a9a"></div>
<div class="t" style="left:539.2px;top:108px;width:80px;text-align:center;color:#c4c4c4;font-size:10px;line-height:12px">-1200</div>
<div class="a" style="left:590.9px;top:124px;width:1px;height:3px;background:#9a9a9a"></div>
<div class="a" style="left:603.1px;top:124px;width:1px;height:3px;background:#9a9a9a"></div>
<div class="a" style="left:615.4px;top:124px;width:1px;height:3px;background:#9a9a9a"></div>
<div class="a" style="left:627.6px;top:124px;width:1px;height:3px;background:#9a9a9a"></div>
<div class="a" style="left:639.8px;top:120px;width:1px;height:7px;background:#9a9a9a"></div>
<div class="t" style="left:600.3px;top:108px;width:80px;text-align:center;color:#c4c4c4;font-size:10px;line-height:12px">-1050</div>
<div class="a" style="left:652.0px;top:124px;width:1px;height:3px;background:#9a9a9a"></div>
<div class="a" style="left:664.2px;top:124px;width:1px;height:3px;background:#9a9a9a"></div>
<div class="a" style="left:676.5px;top:124px;width:1px;height:3px;background:#9a9a9a"></div>
<div class="a" style="left:688.7px;top:124px;width:1px;height:3px;background:#9a9a9a"></div>
<div class="a" style="left:700.9px;top:120px;width:1px;height:7px;background:#9a9a9a"></div>
<div class="t" style="left:661.4px;top:108px;width:80px;text-align:center;color:#c4c4c4;font-size:10px;line-height:12px">-900</div>
<div class="a" style="left:713.1px;top:124px;width:1px;height:3px;background:#9a9a9a"></div>
<div class="a" style="left:725.3px;top:124px;width:1px;height:3px;background:#9a9a9a"></div>
<div class="a" style="left:737.6px;top:124px;width:1px;height:3px;background:#9a9a9a"></div>
<div class="a" style="left:749.8px;top:124px;width:1px;height:3px;background:#9a9a9a"></div>
<div class="a" style="left:762.0px;top:120px;width:1px;height:7px;background:#9a9a9a"></div>
<div class="t" style="left:722.5px;top:108px;width:80px;text-align:center;color:#c4c4c4;font-size:10px;line-height:12px">-750</div>
<div class="a" style="left:774.2px;top:124px;width:1px;height:3px;background:#9a9a9a"></div>
<div class="a" style="left:786.4px;top:124px;width:1px;height:3px;background:#9a9a9a"></div>
<div class="a" style="left:798.7px;top:124px;width:1px;height:3px;background:#9a9a9a"></div>
<div class="a" style="left:810.9px;top:124px;width:1px;height:3px;background:#9a9a9a"></div>
<div class="a" style="left:823.1px;top:120px;width:1px;height:7px;background:#9a9a9a"></div>
<div class="t" style="left:783.6px;top:108px;width:80px;text-align:center;color:#c4c4c4;font-size:10px;line-height:12px">-600</div>
<div class="a" style="left:835.3px;top:124px;width:1px;height:3px;background:#9a9a9a"></div>
<div class="a" style="left:847.5px;top:124px;width:1px;height:3px;background:#9a9a9a"></div>
<div class="a" style="left:859.8px;top:124px;width:1px;height:3px;background:#9a9a9a"></div>
<div class="a" style="left:872.0px;top:124px;width:1px;height:3px;background:#9a9a9a"></div>
<div class="a" style="left:884.2px;top:120px;width:1px;height:7px;background:#9a9a9a"></div>
<div class="t" style="left:844.7px;top:108px;width:80px;text-align:center;color:#c4c4c4;font-size:10px;line-height:12px">-450</div>
<div class="a" style="left:896.4px;top:124px;width:1px;height:3px;background:#9a9a9a"></div>
<div class="a" style="left:908.6px;top:124px;width:1px;height:3px;background:#9a9a9a"></div>
<div class="a" style="left:920.9px;top:124px;width:1px;height:3px;background:#9a9a9a"></div>
<div class="a" style="left:933.1px;top:124px;width:1px;height:3px;background:#9a9a9a"></div>
<div class="a" style="left:945.3px;top:120px;width:1px;height:7px;background:#9a9a9a"></div>
<div class="t" style="left:905.8px;top:108px;width:80px;text-align:center;color:#c4c4c4;font-size:10px;line-height:12px">-300</div>
<div class="a" style="left:957.5px;top:124px;width:1px;height:3px;background:#9a9a9a"></div>
<div class="a" style="left:969.7px;top:124px;width:1px;height:3px;background:#9a9a9a"></div>
<div class="a" style="left:982.0px;top:124px;width:1px;height:3px;background:#9a9a9a"></div>
<div class="a" style="left:994.2px;top:124px;width:1px;height:3px;background:#9a9a9a"></div>
<div class="a" style="left:1006.4px;top:120px;width:1px;height:7px;background:#9a9a9a"></div>
<div class="t" style="left:966.9px;top:108px;width:80px;text-align:center;color:#c4c4c4;font-size:10px;line-height:12px">-150</div>
<div class="a" style="left:1018.6px;top:124px;width:1px;height:3px;background:#9a9a9a"></div>
<div class="a" style="left:1030.8px;top:124px;width:1px;height:3px;background:#9a9a9a"></div>
<div class="a" style="left:1043.1px;top:124px;width:1px;height:3px;background:#9a9a9a"></div>
<div class="a" style="left:1055.3px;top:124px;width:1px;height:3px;background:#9a9a9a"></div>
<div class="a" style="left:1067.5px;top:120px;width:1px;height:7px;background:#9a9a9a"></div>
<div class="t" style="left:1028.0px;top:108px;width:80px;text-align:center;color:#c4c4c4;font-size:10px;line-height:12px">0</div>
<div class="a" style="left:1079.7px;top:124px;width:1px;height:3px;background:#9a9a9a"></div>
<div class="a" style="left:1091.9px;top:124px;width:1px;height:3px;background:#9a9a9a"></div>
<div class="a" style="left:1104.2px;top:124px;width:1px;height:3px;background:#9a9a9a"></div>
<div class="a" style="left:1116.4px;top:124px;width:1px;height:3px;background:#9a9a9a"></div>
<div class="a" style="left:1128.6px;top:120px;width:1px;height:7px;background:#9a9a9a"></div>
<div class="t" style="left:1089.1px;top:108px;width:80px;text-align:center;color:#c4c4c4;font-size:10px;line-height:12px">150</div>
<div class="a" style="left:1140.8px;top:124px;width:1px;height:3px;background:#9a9a9a"></div>
<div class="a" style="left:1153.0px;top:124px;width:1px;height:3px;background:#9a9a9a"></div>
<div class="a" style="left:1165.3px;top:124px;width:1px;height:3px;background:#9a9a9a"></div>
<div class="a" style="left:1177.5px;top:124px;width:1px;height:3px;background:#9a9a9a"></div>
<div class="a" style="left:1189.7px;top:120px;width:1px;height:7px;background:#9a9a9a"></div>
<div class="t" style="left:1150.2px;top:108px;width:80px;text-align:center;color:#c4c4c4;font-size:10px;line-height:12px">300</div>
<div class="a" style="left:1201.9px;top:124px;width:1px;height:3px;background:#9a9a9a"></div>
<div class="a" style="left:1214.1px;top:124px;width:1px;height:3px;background:#9a9a9a"></div>
<div class="a" style="left:1226.4px;top:124px;width:1px;height:3px;background:#9a9a9a"></div>
<div class="a" style="left:1238.6px;top:124px;width:1px;height:3px;background:#9a9a9a"></div>
<div class="a" style="left:1250.8px;top:120px;width:1px;height:7px;background:#9a9a9a"></div>
<div class="t" style="left:1211.3px;top:108px;width:80px;text-align:center;color:#c4c4c4;font-size:10px;line-height:12px">450</div>
<div class="a" style="left:1263.0px;top:124px;width:1px;height:3px;background:#9a9a9a"></div>
<div class="a" style="left:1275.2px;top:124px;width:1px;height:3px;background:#9a9a9a"></div>
<div class="a" style="left:1287.5px;top:124px;width:1px;height:3px;background:#9a9a9a"></div>
<div class="a" style="left:1299.7px;top:124px;width:1px;height:3px;background:#9a9a9a"></div>
<div class="a" style="left:1311.9px;top:120px;width:1px;height:7px;background:#9a9a9a"></div>
<div class="t" style="left:1272.4px;top:108px;width:80px;text-align:center;color:#c4c4c4;font-size:10px;line-height:12px">600</div>
<div class="a" style="left:1324.1px;top:124px;width:1px;height:3px;background:#9a9a9a"></div>
<div class="a" style="left:1336.3px;top:124px;width:1px;height:3px;background:#9a9a9a"></div>
<div class="a" style="left:1348.6px;top:124px;width:1px;height:3px;background:#9a9a9a"></div>
<div class="a" style="left:1360.8px;top:124px;width:1px;height:3px;background:#9a9a9a"></div>
<div class="a" style="left:1373.0px;top:120px;width:1px;height:7px;background:#9a9a9a"></div>
<div class="t" style="left:1333.5px;top:108px;width:80px;text-align:center;color:#c4c4c4;font-size:10px;line-height:12px">750</div>
<div class="a" style="left:1385.2px;top:124px;width:1px;height:3px;background:#9a9a9a"></div>
<div class="a" style="left:1397.4px;top:124px;width:1px;height:3px;background:#9a9a9a"></div>
<div class="a" style="left:1409.7px;top:124px;width:1px;height:3px;background:#9a9a9a"></div>
<div class="a" style="left:1421.9px;top:124px;width:1px;height:3px;background:#9a9a9a"></div>
<div class="a" style="left:1434.1px;top:120px;width:1px;height:7px;background:#9a9a9a"></div>
<div class="t" style="left:1394.6px;top:108px;width:80px;text-align:center;color:#c4c4c4;font-size:10px;line-height:12px">900</div>
<div class="a" style="left:1446.3px;top:124px;width:1px;height:3px;background:#9a9a9a"></div>
<div class="a" style="left:1458.5px;top:124px;width:1px;height:3px;background:#9a9a9a"></div>
<div class="a" style="left:1470.8px;top:124px;width:1px;height:3px;background:#9a9a9a"></div>
<div class="a" style="left:1483.0px;top:124px;width:1px;height:3px;background:#9a9a9a"></div>
<div class="a" style="left:1495.2px;top:120px;width:1px;height:7px;background:#9a9a9a"></div>
<div class="t" style="left:1455.7px;top:108px;width:80px;text-align:center;color:#c4c4c4;font-size:10px;line-height:12px">1050</div>
<div class="a" style="left:1507.4px;top:124px;width:1px;height:3px;background:#9a9a9a"></div>
<div class="a" style="left:1519.6px;top:124px;width:1px;height:3px;background:#9a9a9a"></div>
<div class="a" style="left:1531.9px;top:124px;width:1px;height:3px;background:#9a9a9a"></div>
<div class="a" style="left:1544.1px;top:124px;width:1px;height:3px;background:#9a9a9a"></div>
<div class="a" style="left:1556.3px;top:120px;width:1px;height:7px;background:#9a9a9a"></div>
<div class="t" style="left:1516.8px;top:108px;width:80px;text-align:center;color:#c4c4c4;font-size:10px;line-height:12px">1200</div>
<div class="a" style="left:1568.5px;top:124px;width:1px;height:3px;background:#9a9a9a"></div>
<div class="a" style="left:1580.7px;top:124px;width:1px;height:3px;background:#9a9a9a"></div>
<div class="a" style="left:546px;top:590.2px;width:4px;height:1px;background:#9a9a9a"></div>
<div class="a" style="left:546px;top:578.0px;width:4px;height:1px;background:#9a9a9a"></div>
<div class="a" style="left:546px;top:565.7px;width:4px;height:1px;background:#9a9a9a"></div>
<div class="a" style="left:546px;top:553.5px;width:4px;height:1px;background:#9a9a9a"></div>
<div class="a" style="left:542px;top:541.3px;width:8px;height:1px;background:#9a9a9a"></div>
<div class="t" style="left:497px;top:534.8px;width:80px;text-align:center;color:#c4c4c4;font-size:10px;line-height:12px;transform:rotate(-90deg);margin-left:0.5px">-450</div>
<div class="a" style="left:546px;top:529.1px;width:4px;height:1px;background:#9a9a9a"></div>
<div class="a" style="left:546px;top:516.9px;width:4px;height:1px;background:#9a9a9a"></div>
<div class="a" style="left:546px;top:504.6px;width:4px;height:1px;background:#9a9a9a"></div>
<div class="a" style="left:546px;top:492.4px;width:4px;height:1px;background:#9a9a9a"></div>
<div class="a" style="left:542px;top:480.2px;width:8px;height:1px;background:#9a9a9a"></div>
<div class="t" style="left:497px;top:473.7px;width:80px;text-align:center;color:#c4c4c4;font-size:10px;line-height:12px;transform:rotate(-90deg);margin-left:0.5px">-300</div>
<div class="a" style="left:546px;top:468.0px;width:4px;height:1px;background:#9a9a9a"></div>
<div class="a" style="left:546px;top:455.8px;width:4px;height:1px;background:#9a9a9a"></div>
<div class="a" style="left:546px;top:443.5px;width:4px;height:1px;background:#9a9a9a"></div>
<div class="a" style="left:546px;top:431.3px;width:4px;height:1px;background:#9a9a9a"></div>
<div class="a" style="left:542px;top:419.1px;width:8px;height:1px;background:#9a9a9a"></div>
<div class="t" style="left:497px;top:412.6px;width:80px;text-align:center;color:#c4c4c4;font-size:10px;line-height:12px;transform:rotate(-90deg);margin-left:0.5px">-150</div>
<div class="a" style="left:546px;top:406.9px;width:4px;height:1px;background:#9a9a9a"></div>
<div class="a" style="left:546px;top:394.7px;width:4px;height:1px;background:#9a9a9a"></div>
<div class="a" style="left:546px;top:382.4px;width:4px;height:1px;background:#9a9a9a"></div>
<div class="a" style="left:546px;top:370.2px;width:4px;height:1px;background:#9a9a9a"></div>
<div class="a" style="left:542px;top:358.0px;width:8px;height:1px;background:#9a9a9a"></div>
<div class="t" style="left:497px;top:351.5px;width:80px;text-align:center;color:#c4c4c4;font-size:10px;line-height:12px;transform:rotate(-90deg);margin-left:0.5px">0</div>
<div class="a" style="left:546px;top:345.8px;width:4px;height:1px;background:#9a9a9a"></div>
<div class="a" style="left:546px;top:333.6px;width:4px;height:1px;background:#9a9a9a"></div>
<div class="a" style="left:546px;top:321.3px;width:4px;height:1px;background:#9a9a9a"></div>
<div class="a" style="left:546px;top:309.1px;width:4px;height:1px;background:#9a9a9a"></div>
<div class="a" style="left:542px;top:296.9px;width:8px;height:1px;background:#9a9a9a"></div>
<div class="t" style="left:497px;top:290.4px;width:80px;text-align:center;color:#c4c4c4;font-size:10px;line-height:12px;transform:rotate(-90deg);margin-left:0.5px">150</div>
<div class="a" style="left:546px;top:284.7px;width:4px;height:1px;background:#9a9a9a"></div>
<div class="a" style="left:546px;top:272.5px;width:4px;height:1px;background:#9a9a9a"></div>
<div class="a" style="left:546px;top:260.2px;width:4px;height:1px;background:#9a9a9a"></div>
<div class="a" style="left:546px;top:248.0px;width:4px;height:1px;background:#9a9a9a"></div>
<div class="a" style="left:542px;top:235.8px;width:8px;height:1px;background:#9a9a9a"></div>
<div class="t" style="left:497px;top:229.3px;width:80px;text-align:center;color:#c4c4c4;font-size:10px;line-height:12px;transform:rotate(-90deg);margin-left:0.5px">300</div>
<div class="a" style="left:546px;top:223.6px;width:4px;height:1px;background:#9a9a9a"></div>
<div class="a" style="left:546px;top:211.4px;width:4px;height:1px;background:#9a9a9a"></div>
<div class="a" style="left:546px;top:199.1px;width:4px;height:1px;background:#9a9a9a"></div>
<div class="a" style="left:546px;top:186.9px;width:4px;height:1px;background:#9a9a9a"></div>
<div class="a" style="left:542px;top:174.7px;width:8px;height:1px;background:#9a9a9a"></div>
<div class="t" style="left:497px;top:168.2px;width:80px;text-align:center;color:#c4c4c4;font-size:10px;line-height:12px;transform:rotate(-90deg);margin-left:0.5px">450</div>
<div class="a" style="left:546px;top:162.5px;width:4px;height:1px;background:#9a9a9a"></div>
<div class="a" style="left:546px;top:150.3px;width:4px;height:1px;background:#9a9a9a"></div>
<div class="a" style="left:546px;top:138.0px;width:4px;height:1px;background:#9a9a9a"></div>
<div class="a" style="left:546px;top:125.8px;width:4px;height:1px;background:#9a9a9a"></div>
<div class="t" style="left:979px;top:324px;color:#646464;font-weight:bold;font-size:51px;line-height:60px;letter-spacing:1.7px;-webkit-text-stroke:1.2px #646464">Cavalr</div>
<div class="a" style="left:1071px;top:348px;width:11px;height:11px;background:#fff"></div><div class="a" style="left:1072px;top:349px;width:9px;height:9px;background:#b98df5"></div>
<div class="t" style="left:1085px;top:347px;color:#000;font-size:11px;text-shadow:1px 0 0 #fff,-1px 0 0 #fff,0 1px 0 #fff,0 -1px 0 #fff,1px 1px 0 #fff,-1px -1px 0 #fff,1px -1px 0 #fff,-1px 1px 0 #fff,0 0 2px #fff">Cursor</div>
<div class="a" style="left:1064px;top:355px;width:8px;height:8px;border:1px solid #444;border-radius:50%"></div>
<div class="a" style="left:1066.5px;top:357.5px;width:3px;height:3px;background:#444;border-radius:50%"></div>
<div class="a" style="left:1072px;top:370px;width:1px;height:41px;background:#4fd68a"></div>
<div class="a" style="left:1079px;top:370px;width:1px;height:41px;background:#4fd68a"></div>
<div class="a" style="left:1069px;top:364px;width:7px;height:7px;border:1px solid #4fd68a"></div>
<div class="a" style="left:1075px;top:364px;width:7px;height:7px;border:1px solid #4fd68a"></div>
<div class="a" style="left:1069px;top:410px;width:7px;height:7px;border:1px solid #4fd68a"></div>
<div class="a" style="left:1075px;top:410px;width:7px;height:7px;border:1px solid #4fd68a"></div>
<div class="t" style="left:570px;top:493px;font-size:11.5px;color:#f2f2f2">Hold S <span style="color:rgba(140,140,140,0.68)">Direct Layer Selection</span></div>
<div class="t" style="left:570px;top:507px;font-size:11.5px;color:#f2f2f2">Space <span style="color:rgba(140,140,140,0.68)">Play/ Stop</span></div>
<div class="t" style="left:570px;top:521px;font-size:11.5px;color:#f2f2f2">Space + click + drag <span style="color:rgba(140,140,140,0.68)">Pan</span></div>
<div class="t" style="left:570px;top:535px;font-size:11.5px;color:#f2f2f2">Alt + click + drag <span style="color:rgba(140,140,140,0.68)">Move Pivot Point</span></div>
<div class="t" style="left:570px;top:549px;font-size:11.5px;color:#f2f2f2">Shift <span style="color:rgba(140,140,140,0.68)">Enable Snapping</span></div>
<div class="t" style="left:998px;top:570px;color:#111;font-size:12px;letter-spacing:0.2px;text-shadow:0 0 1px #fff,0 1px 1px #ddd">Viewport Quality: High</div>
<div class="a" style="left:535px;top:594px;width:78px;height:16px;background:#2a2a2a;border-radius:3px"></div>
<div class="t" style="left:538px;top:595px;color:#e8e8e8">41%</div>
<svg style="left:601px;top:599px" width="10" height="6"><path d="M0.5 0.5L5 5L9.5 0.5" stroke="#bbb" fill="none"/></svg>
<div class="a" style="left:866px;top:592px;width:100px;height:19px;background:#2c2c2c;border-radius:3px;border:1px solid #262626"></div>
<div class="a" style="left:886px;top:593px;width:1px;height:17px;background:#262626"></div>
<div class="a" style="left:906px;top:593px;width:1px;height:17px;background:#262626"></div>
<div class="a" style="left:926px;top:593px;width:1px;height:17px;background:#262626"></div>
<div class="a" style="left:946px;top:593px;width:1px;height:17px;background:#262626"></div>
<svg style="left:870px;top:596px" width="12" height="11"><rect x="0.5" y="0.5" width="1.5" height="10" fill="#cfcfcf"/><path d="M11 0.5V10.5L3.5 5.5Z" fill="#cfcfcf"/></svg>
<svg style="left:890px;top:596px" width="12" height="11"><rect x="9.5" y="0.5" width="1.5" height="10" fill="#cfcfcf"/><path d="M8 0.5V10.5L0.5 5.5Z" fill="#cfcfcf"/></svg>
<svg style="left:911px;top:596px" width="10" height="11"><path d="M0.5 0.5V10.5L9 5.5Z" fill="#cfcfcf"/></svg>
<svg style="left:930px;top:596px" width="12" height="11"><rect x="0.5" y="0.5" width="1.5" height="10" fill="#cfcfcf"/><path d="M3.5 0.5V10.5L11 5.5Z" fill="#cfcfcf"/></svg>
<svg style="left:950px;top:596px" width="12" height="11"><rect x="9.5" y="0.5" width="1.5" height="10" fill="#cfcfcf"/><path d="M0.5 0.5V10.5L8 5.5Z" fill="#cfcfcf"/></svg>
<div class="a" style="left:971px;top:592px;width:20px;height:19px;background:#2c2c2c;border-radius:3px;border:1px solid #262626"></div>
<svg style="left:974px;top:596px" width="14" height="11"><path d="M5 3H0.5V9.5H13V4.5" stroke="#cfcfcf" stroke-width="1.2" fill="none"/><path d="M7 0.5L12 3L7 6Z" fill="#cfcfcf"/></svg>
<div class="a" style="left:1232px;top:593px;width:37px;height:18px;background:#333;border-radius:3px"></div>
<svg style="left:1233px;top:597px" width="15" height="9"><path d="M0.5 4.5L4 0.5H14V8.5H4Z" fill="#d0d0d0"/><circle cx="5" cy="4.5" r="1.3" fill="#333"/></svg>
<div class="t" style="left:1257px;top:595px;color:#bbb">0</div>
<div class="a" style="left:1272px;top:592px;width:31px;height:19px;background:#2c2c2c;border-radius:3px;border:1px solid #2a2a2a"></div>
<div class="a" style="left:1291px;top:593px;width:1px;height:17px;background:#242424"></div>
<svg style="left:1294px;top:598px" width="7" height="8"><path d="M0.7 0.7V7.3L6 4Z" stroke="#8a8a8a" stroke-width="0.9" fill="none"/></svg>
<svg style="left:1275px;top:595px" width="15" height="13"><path d="M0.5 4H3.5L7 0.5V12.5L3.5 9H0.5Z" fill="#2ecc71"/><path d="M9 3.5Q10.5 6.5 9 9.5M11.5 1.5Q14 6.5 11.5 11.5" stroke="#2ecc71" stroke-width="1.3" fill="none"/></svg>
<div class="a" style="left:1307px;top:592px;width:31px;height:19px;background:#2c2c2c;border-radius:3px;border:1px solid #2a2a2a"></div>
<div class="a" style="left:1308px;top:593px;width:18px;height:17px;background:#3d3d3d;border-radius:2px 0 0 2px"></div>
<div class="a" style="left:1326px;top:593px;width:1px;height:17px;background:#242424"></div>
<svg style="left:1329px;top:598px" width="7" height="8"><path d="M0.7 0.7V7.3L6 4Z" stroke="#8a8a8a" stroke-width="0.9" fill="none"/></svg>
<svg style="left:1309px;top:594px" width="16" height="16"><g transform="rotate(-45 8 8)"><path d="M4 13V8A4 4 0 0 1 12 8V13" stroke="#d8d8d8" stroke-width="2.4" fill="none" stroke-linecap="round"/></g></svg>
<div class="a" style="left:1342px;top:592px;width:31px;height:19px;background:#2c2c2c;border-radius:3px;border:1px solid #2a2a2a"></div>
<div class="a" style="left:1343px;top:593px;width:18px;height:17px;background:#3d3d3d;border-radius:2px 0 0 2px"></div>
<div class="a" style="left:1361px;top:593px;width:1px;height:17px;background:#242424"></div>
<svg style="left:1364px;top:598px" width="7" height="8"><path d="M0.7 0.7V7.3L6 4Z" stroke="#8a8a8a" stroke-width="0.9" fill="none"/></svg>
<svg style="left:1345px;top:595px" width="14" height="14"><path d="M4.5 0.5V13.5M9.5 0.5V13.5M0.5 4.5H13.5M0.5 9.5H13.5" stroke="#e0e0e0" stroke-width="1.1"/></svg>
<div class="a" style="left:1377px;top:592px;width:20px;height:19px;background:#2c2c2c;border-radius:3px"></div>
<svg style="left:1379px;top:596px" width="16" height="11"><rect x="0.5" y="0.5" width="3.5" height="2.5" fill="#2ecc71"/><rect x="0.5" y="4" width="3.5" height="6.5" fill="#2ecc71"/><rect x="5" y="0.5" width="10" height="6" stroke="#2ecc71" stroke-width="1.3" fill="none"/><rect x="5" y="8" width="10.5" height="2.5" fill="#2ecc71"/></svg>
<div class="a" style="left:1400px;top:592px;width:20px;height:19px;background:#333;border-radius:3px"></div>
<svg style="left:1403px;top:597px" width="14" height="10"><path d="M0.5 0.5L4.5 5L0.5 9.5V0.5ZM4.5 0.5L8.5 5L4.5 9.5M8.5 0.5L12.5 5L8.5 9.5" stroke="#d0d0d0" stroke-width="1.5" fill="none"/></svg>
<div class="a" style="left:1424px;top:592px;width:30px;height:19px;background:#2c2c2c;border-radius:3px;border:1px solid #2a2a2a"></div>
<div class="a" style="left:1425px;top:593px;width:17px;height:17px;background:#3d3d3d;border-radius:2px 0 0 2px"></div>
<div class="a" style="left:1442px;top:593px;width:1px;height:17px;background:#242424"></div>
<svg style="left:1445px;top:598px" width="7" height="8"><path d="M0.7 0.7V7.3L6 4Z" stroke="#8a8a8a" stroke-width="0.9" fill="none"/></svg>
<div class="a" style="left:1426px;top:596px;width:14px;height:12px;border:1.3px solid #d8d8d8;border-bottom-width:2.5px;background:#3d3d3d"></div>
<div class="a" style="left:1458px;top:592px;width:31px;height:19px;background:#2c2c2c;border-radius:3px;border:1px solid #2a2a2a"></div>
<div class="a" style="left:1459px;top:593px;width:18px;height:17px;background:#3d3d3d;border-radius:2px 0 0 2px"></div>
<div class="a" style="left:1477px;top:593px;width:1px;height:17px;background:#242424"></div>
<svg style="left:1480px;top:598px" width="7" height="8"><path d="M0.7 0.7V7.3L6 4Z" stroke="#8a8a8a" stroke-width="0.9" fill="none"/></svg>
<svg style="left:1460px;top:595px" width="15" height="14"><rect x="0.5" y="0.5" width="8" height="5" stroke="#d8d8d8" fill="none"/><path d="M9.5 3V7.5H3M11.5 5V9.5H5M13.5 7V11.5H7" stroke="#aaa" fill="none"/></svg>
<div class="a" style="left:1493px;top:592px;width:31px;height:19px;background:#2c2c2c;border-radius:3px;border:1px solid #2a2a2a"></div>
<div class="a" style="left:1494px;top:593px;width:18px;height:17px;background:#3d3d3d;border-radius:2px 0 0 2px"></div>
<div class="a" style="left:1512px;top:593px;width:1px;height:17px;background:#242424"></div>
<svg style="left:1515px;top:598px" width="7" height="8"><path d="M0.7 0.7V7.3L6 4Z" stroke="#8a8a8a" stroke-width="0.9" fill="none"/></svg>
<svg style="left:1495px;top:595px" width="15" height="14"><rect x="0.5" y="0.5" width="8" height="8" fill="#cfcfcf"/><rect x="5" y="5" width="8.5" height="8.5" stroke="#dcdcdc" stroke-width="1.2" fill="#3d3d3d"/></svg>
<div class="a" style="left:1528px;top:592px;width:31px;height:19px;background:#2c2c2c;border-radius:3px;border:1px solid #2a2a2a"></div>
<div class="a" style="left:1547px;top:593px;width:1px;height:17px;background:#242424"></div>
<svg style="left:1550px;top:598px" width="7" height="8"><path d="M0.7 0.7V7.3L6 4Z" stroke="#8a8a8a" stroke-width="0.9" fill="none"/></svg>
<svg style="left:1532px;top:596px" width="12" height="12"><rect x="0" y="0" width="3" height="3" fill="#2ecc71"/><rect x="6" y="0" width="3" height="3" fill="#2ecc71"/><rect x="3" y="3" width="3" height="3" fill="#2ecc71"/><rect x="9" y="3" width="3" height="3" fill="#2ecc71"/><rect x="0" y="6" width="3" height="3" fill="#2ecc71"/><rect x="6" y="6" width="3" height="3" fill="#2ecc71"/><rect x="3" y="9" width="3" height="3" fill="#2ecc71"/><rect x="9" y="9" width="3" height="3" fill="#2ecc71"/></svg>
<div class="a" style="left:1563px;top:592px;width:20px;height:19px;background:#2c2c2c;border-radius:3px"></div>
<svg style="left:1565px;top:594px" width="16" height="16"><circle cx="8" cy="8" r="4" stroke="#e0e0e0" stroke-width="2.8" fill="none"/><path d="M8 1V3.5M8 12.5V15M1 8H3.5M12.5 8H15M3 3L4.8 4.8M11.2 11.2L13 13M3 13L4.8 11.2M11.2 4.8L13 3" stroke="#e0e0e0" stroke-width="2.4"/></svg>
<div class="a" style="left:1587px;top:85px;width:6px;height:534px;background:#141414"></div>
<div class="a" style="left:488px;top:613px;width:1426px;height:6px;background:#141414"></div>
<!-- RIGHT PANEL -->
<div class="a" style="left:1593px;top:85px;width:321px;height:534px;background:#1b1b1b"></div>
<div class="a" style="left:1593px;top:85px;width:321px;height:22px;background:#1c1c1c"></div>
<div class="a" style="left:1593px;top:85px;width:40px;height:22px;background:#474747;border-radius:4px 4px 0 0"></div>
<div class="a" style="left:1633px;top:85px;width:69px;height:22px;background:#2b2b2b;border-radius:4px 4px 0 0"></div>
<div class="t" style="left:1598px;top:89px;color:#e8e8e8">Color</div>
<div class="t" style="left:1639px;top:89px;color:#e8e8e8">Add Layers</div>
<div class="a" style="left:1593px;top:107px;width:321px;height:409px;background:#474747"></div>
<div class="a" style="left:1900px;top:107px;width:14px;height:409px;background:#2c2c2c"></div>
<div class="a" style="left:1902px;top:108px;width:10px;height:359px;background:#4b4b4b;border-radius:5px"></div>
<div class="a" style="left:1646px;top:119.5px;width:200px;height:200px;border-radius:50%;background:conic-gradient(from 0deg,#90ff00 0deg,#d8ff00 25deg,#ffcc00 48deg,#ff6000 68deg,#ff0000 90deg,#ff0060 120deg,#ff00e0 145deg,#a000ff 178deg,#3000ff 200deg,#0000ff 212deg,#0080ff 235deg,#00d8ff 250deg,#00ffc0 272deg,#00ff70 295deg,#00ff00 322deg,#90ff00 360deg)"></div>
<div class="a" style="left:1671px;top:144.5px;width:150px;height:150px;border-radius:50%;background:#474747"></div>
<div class="a" style="left:1702px;top:176px;width:90px;height:90px;background:linear-gradient(to right,#000,rgba(0,0,0,0)),linear-gradient(to bottom,#fff,#f00)"></div>
<div class="a" style="left:1739px;top:170px;width:12px;height:12px;border:1.3px solid #ddd;border-radius:50%"></div>
<div class="a" style="left:1827px;top:214px;width:12px;height:12px;border:1.3px solid #fff;border-radius:50%"></div>
<div class="a" style="left:1600px;top:333px;width:22px;height:22px;background:#7a7a7a;border-radius:3px"></div>
<div class="t" style="left:1625px;top:338px;color:#e8e8e8">Gray</div>
<div class="a" style="left:1871px;top:333px;width:22px;height:22px;background:#2c2c2c;border:1px solid #242424;border-radius:3px"></div>
<svg style="left:1875px;top:337px" width="14" height="14"><path d="M1.5 12.5L8 6" stroke="#ccc" stroke-width="1.6"/><path d="M7.5 4L10.5 1.2L12.8 3.5L10 6.5Z" fill="#ddd"/></svg>
<div class="a" style="left:1600px;top:360px;width:50px;height:18px;background:#474747;border:1px solid #303030;border-radius:3px"></div>
<div class="t" style="left:1603px;top:362px;color:#e8e8e8">Hex</div>
<svg style="left:1635px;top:366px" width="10" height="6"><path d="M0.5 0.5L5 5L9.5 0.5" stroke="#bbb" fill="none"/></svg>
<div class="a" style="left:1653px;top:359px;width:240px;height:21px;background:#2a2a2a;border-radius:2px"></div>
<div class="t" style="left:1659px;top:363px;color:#5f5f5f">#</div>
<div class="t" style="left:1670px;top:363px;color:#e8e8e8">7a7a7a</div>
<div class="a" style="left:1600px;top:390px;width:234px;height:4px;background:#e8e8e8;border-radius:2px"></div>
<div class="a" style="left:1828px;top:386px;width:12px;height:12px;background:#6fcfae;border:1px solid #4f9f86;border-radius:50%"></div>
<div class="a" style="left:1832px;top:390px;width:4px;height:4px;background:#56a98f;border-radius:50%"></div>
<div class="a" style="left:1849px;top:384px;width:44px;height:16px;background:#2a2a2a;border-radius:2px"></div>
<div class="t" style="left:1852px;top:385px;color:#5f5f5f">A</div>
<div class="t" style="left:1865px;top:385px;color:#e8e8e8">255</div>
<div class="a" style="left:1597px;top:406px;width:299px;height:22px;background:#262626"></div>
<div class="a" style="left:1599px;top:408px;width:148px;height:20px;background:#474747;border-radius:3px 3px 0 0"></div>
<div class="a" style="left:1748px;top:408px;width:146px;height:20px;background:#2e2e2e;border-radius:3px 3px 0 0"></div>
<div class="t" style="left:1648px;top:410px;color:#e8e8e8">Swatches</div>
<div class="t" style="left:1793px;top:410px;color:#c8c8c8">Generator</div>
<div class="a" style="left:1597px;top:431px;width:258px;height:18px;background:#5a5a5a;border-radius:3px"></div>
<div class="a" style="left:1599px;top:432px;width:62px;height:16px;background:#2c2c2c;border-radius:3px"></div>
<svg style="left:1605px;top:435px" width="11" height="10"><path d="M1 0.5V9.5M4 0.5V9.5M6.5 0.5L9.5 9.5" stroke="#2ecc71" stroke-width="1.6"/></svg>
<div class="t" style="left:1621px;top:433px;color:#e8e8e8">Library</div>
<svg style="left:1671px;top:435px" width="11" height="10"><path d="M1 1H10V9H1Z" stroke="#ddd" fill="none"/><path d="M3 4H8M3 6.5H8" stroke="#ddd"/></svg>
<div class="t" style="left:1687px;top:433px;color:#e8e8e8">Project</div>
<svg style="left:1740px;top:434px" width="9" height="11"><path d="M0.5 0.5H5.5L8.5 3.5V10.5H0.5Z" stroke="#ddd" fill="none"/></svg>
<div class="t" style="left:1752px;top:433px;color:#e8e8e8">Scene</div>
<svg style="left:1800px;top:435px" width="11" height="11"><path d="M1 1H10V6L6 10H1Z" stroke="#ddd" fill="none" stroke-linejoin="round"/></svg>
<div class="t" style="left:1816px;top:433px;color:#e8e8e8">Labels</div>
<div class="a" style="left:1858px;top:431px;width:37px;height:18px;background:#5a5a5a;border-radius:3px"></div>
<div class="a" style="left:1859px;top:432px;width:17px;height:16px;background:#2c2c2c;border-radius:3px"></div>
<div class="a" style="left:1863px;top:436px;width:3px;height:3px;background:#2ecc71;box-shadow:5px 0 #2ecc71,0 5px #2ecc71,5px 5px #2ecc71"></div>
<svg style="left:1880px;top:435px" width="11" height="10"><path d="M0 1.5H11M0 5H11M0 8.5H11" stroke="#ddd" stroke-width="1.2"/></svg>
<div class="a" style="left:1597px;top:452px;width:276px;height:17px;background:#4e4e4e;border-radius:2px"></div>
<div class="t" style="left:1600px;top:454px;color:#e8e8e8">Bright</div>
<svg style="left:1859px;top:458px" width="10" height="6"><path d="M0.5 0.5L5 5L9.5 0.5" stroke="#bbb" fill="none"/></svg>
<div class="a" style="left:1880px;top:460px;width:2px;height:2px;background:#ccc;box-shadow:5px 0 #ccc,10px 0 #ccc"></div>
<div class="a" style="left:1597px;top:469px;width:299px;height:47px;background:#2a2a2a"></div>
<div class="a" style="left:1600px;top:472px;width:18px;height:18px;background:#a35fc8;border-radius:3px"></div>
<div class="a" style="left:1622px;top:472px;width:18px;height:18px;background:#00c3f0;border-radius:3px"></div>
<div class="a" style="left:1644px;top:472px;width:18px;height:18px;background:#f3df00;border-radius:3px"></div>
<div class="a" style="left:1666px;top:472px;width:18px;height:18px;background:#f0700c;border-radius:3px"></div>
<div class="a" style="left:1688px;top:472px;width:18px;height:18px;background:#ee0e0e;border-radius:3px"></div>
<div class="a" style="left:1593px;top:516px;width:321px;height:7px;background:#141414"></div>
<div class="a" style="left:1593px;top:523px;width:321px;height:20px;background:#1c1c1c"></div>
<div class="a" style="left:1593px;top:523px;width:38px;height:20px;background:#474747;border-radius:4px 4px 0 0"></div>
<div class="t" style="left:1598px;top:527px;color:#e8e8e8">Align</div>
<div class="a" style="left:1593px;top:543px;width:321px;height:70px;background:#474747"></div>
<div class="t" style="left:1601px;top:557px;color:#e8e8e8">Alignment</div>
<div class="t" style="left:1601px;top:585px;color:#e8e8e8">Distribution</div>
<div class="a" style="left:1790px;top:555px;width:54px;height:17px;background:#2c2c2c;border:1px solid #262626;border-radius:3px"></div>
<div class="a" style="left:1808px;top:555px;width:1px;height:17px;background:#3c3c3c"></div>
<div class="a" style="left:1826px;top:555px;width:1px;height:17px;background:#3c3c3c"></div>
<div class="a" style="left:1852px;top:555px;width:54px;height:17px;background:#2c2c2c;border:1px solid #262626;border-radius:3px"></div>
<div class="a" style="left:1870px;top:555px;width:1px;height:17px;background:#3c3c3c"></div>
<div class="a" style="left:1888px;top:555px;width:1px;height:17px;background:#3c3c3c"></div>
<div class="a" style="left:1790px;top:584px;width:54px;height:17px;background:#2c2c2c;border:1px solid #262626;border-radius:3px"></div>
<div class="a" style="left:1808px;top:584px;width:1px;height:17px;background:#3c3c3c"></div>
<div class="a" style="left:1826px;top:584px;width:1px;height:17px;background:#3c3c3c"></div>
<svg style="left:1793px;top:558px" width="13" height="11"><path d="M0.7 0V11" stroke="#e0e0e0" stroke-width="1.3"/><path d="M3 3H8M3 7H11" stroke="#e0e0e0" stroke-width="1.8"/></svg>
<svg style="left:1811px;top:558px" width="13" height="11"><path d="M6.5 0V11" stroke="#e0e0e0" stroke-width="1.3"/><path d="M3 3H10M1 7H12" stroke="#e0e0e0" stroke-width="1.8"/></svg>
<svg style="left:1829px;top:558px" width="13" height="11"><path d="M12.3 0V11" stroke="#e0e0e0" stroke-width="1.3"/><path d="M5 3H10M1 7H10" stroke="#e0e0e0" stroke-width="1.8"/></svg>
<svg style="left:1855px;top:558px" width="13" height="11"><path d="M0 0.7H13" stroke="#e0e0e0" stroke-width="1.3"/><path d="M4 3V9M8 3V7" stroke="#e0e0e0" stroke-width="1.8"/></svg>
<svg style="left:1873px;top:558px" width="13" height="11"><path d="M0 5.5H13" stroke="#e0e0e0" stroke-width="1.3"/><path d="M4 1V10M9 2V9" stroke="#e0e0e0" stroke-width="1.8"/></svg>
<svg style="left:1891px;top:558px" width="13" height="11"><path d="M0 10.3H13" stroke="#e0e0e0" stroke-width="1.3"/><path d="M4 3V9M9 5V9" stroke="#e0e0e0" stroke-width="1.8"/></svg>
<svg style="left:1793px;top:587px" width="13" height="11"><path d="M1 0V11M12 0V11" stroke="#e0e0e0" stroke-width="1"/><path d="M6.5 2V9" stroke="#e0e0e0" stroke-width="1.8"/></svg>
<svg style="left:1811px;top:587px" width="13" height="11"><path d="M0 1H13M0 10H13" stroke="#e0e0e0" stroke-width="1"/><path d="M3 5.5H10" stroke="#e0e0e0" stroke-width="1.8"/></svg>
<svg style="left:1829px;top:587px" width="13" height="11"><path d="M1 10L4 8M5 7L8 5M9 4L12 2" stroke="#e0e0e0" stroke-width="1.4"/><path d="M0.5 0.5H3M0.5 0.5V3M12.5 10.5H10M12.5 10.5V8" stroke="#e0e0e0" stroke-width="0.9"/></svg>

<!-- BOTTOM SCENE WINDOW -->
<div class="a" style="left:488px;top:619px;width:1432px;height:411px;background:#1b1b1b"></div>
<div class="a" style="left:494px;top:619px;width:1420px;height:22px;background:#1c1c1c"></div>
<div class="a" style="left:494px;top:619px;width:89px;height:22px;background:#474747;border-radius:4px 4px 0 0"></div>
<div class="a" style="left:584px;top:619px;width:100px;height:22px;background:#2b2b2b;border-radius:4px 4px 0 0"></div>
<div class="a" style="left:685px;top:619px;width:112px;height:22px;background:#2b2b2b;border-radius:4px 4px 0 0"></div>
<div class="t" style="left:500px;top:623px;color:#e8e8e8">Scene Window</div>
<div class="t" style="left:590px;top:623px;color:#e8e8e8">JavaScript Editor</div>
<div class="t" style="left:690px;top:623px;color:#e8e8e8">Dependency Graph</div>
<div class="a" style="left:494px;top:641px;width:1420px;height:357px;background:#2a2a2a"></div>
<div class="t" style="left:665px;top:646px;color:#c4c4c4">Jumping Text Coloring</div>
<svg style="left:952px;top:649px" width="8" height="8"><path d="M0.5 0.5L7.5 7.5M7.5 0.5L0.5 7.5" stroke="#bbb" stroke-width="1"/></svg>
<div class="a" style="left:494px;top:663px;width:458px;height:42px;background:#474747"></div>
<div class="a" style="left:497px;top:665px;width:247px;height:20px;background:#2a2a2a;border-radius:10px"></div>
<svg style="left:500px;top:669px" width="13" height="13"><circle cx="5.5" cy="5.5" r="4.3" stroke="#e0e0e0" stroke-width="1.3" fill="none"/><path d="M8.7 8.7L11.5 11.5" stroke="#e0e0e0" stroke-width="2"/></svg>
<div class="t" style="left:520px;top:668px;color:#8c8c8c">Enter a layer name</div>
<div class="a" style="left:746px;top:666px;width:19px;height:19px;background:#2e2e2e;border:1px solid #242424;border-radius:3px"></div>
<svg style="left:750px;top:670px" width="12" height="12"><path d="M6 0.5V11.5M0.5 6H11.5" stroke="#f0f0f0" stroke-width="2"/></svg>
<svg style="left:761px;top:680px" width="4" height="4"><path d="M4 0V4H0Z" fill="#5fd0a8"/></svg>
<div class="a" style="left:791px;top:666px;width:19px;height:19px;background:#2e2e2e;border:1px solid #242424;border-radius:3px"></div>
<svg style="left:793px;top:668px" width="15" height="15"><circle cx="5" cy="10" r="4" fill="#555"/><circle cx="7" cy="8" r="4" fill="#777"/><circle cx="10" cy="5" r="4" fill="#d8d8d8"/></svg>
<div class="a" style="left:812px;top:666px;width:19px;height:19px;background:#2e2e2e;border:1px solid #242424;border-radius:3px"></div>

<svg style="left:813px;top:667px" width="18" height="18"><circle cx="5" cy="4" r="1.3" fill="#ccc"/><circle cx="11.5" cy="5" r="1.3" fill="#ccc"/><circle cx="5" cy="10.5" r="1.3" fill="#ccc"/><path d="M11 7.5Q11.5 10.5 14.5 11Q11.5 11.5 11 14.5Q10.5 11.5 7.5 11Q10.5 10.5 11 7.5Z" fill="#eee"/><path d="M14.5 17L17 14.5V17Z" fill="#5fd0a8"/></svg>
<div class="a" style="left:834px;top:666px;width:18px;height:19px;background:#2e2e2e;border:1px solid #242424;border-radius:3px"></div>
<svg style="left:836px;top:669px" width="14" height="13"><path d="M0 2H14M0 6.5H14M0 11H14" stroke="#ccc" stroke-width="1"/><circle cx="5" cy="2" r="1.8" fill="#2e2e2e" stroke="#ccc"/><circle cx="9" cy="6.5" r="1.8" fill="#2e2e2e" stroke="#ccc"/><circle cx="5" cy="11" r="1.8" fill="#2e2e2e" stroke="#ccc"/></svg>
<div class="a" style="left:852px;top:661px;width:101px;height:29px;border:3px solid #bfe81c;background:#262626"></div>
<div class="t" style="left:861px;top:668px;color:#555">F</div>
<div class="t" style="left:873px;top:668px;color:#e8e8e8">20</div>
<svg style="left:501px;top:690px" width="9" height="12"><path d="M2 5V3.5A2.5 2.5 0 0 1 7 3.5V5" stroke="#c8c8c8" stroke-width="1.3" fill="none"/><rect x="0.5" y="5" width="8" height="6.5" fill="#c8c8c8"/><rect x="3.7" y="7.5" width="1.6" height="1.6" fill="#474747"/></svg>
<svg style="left:517px;top:691px" width="14" height="10"><path d="M0.5 5Q7 -2 13.5 5Q7 12 0.5 5Z" stroke="#c8c8c8" stroke-width="1.1" fill="none"/><circle cx="7" cy="5" r="2" fill="#c8c8c8"/></svg>
<svg style="left:537px;top:689px" width="13" height="14"><path d="M6.5 0.7L12.3 3.7V10.3L6.5 13.3L0.7 10.3V3.7Z M0.7 3.7L6.5 6.7L12.3 3.7M6.5 6.7V13.3" stroke="#c8c8c8" stroke-width="1.1" fill="none"/></svg>
<svg style="left:556px;top:690px" width="14" height="12"><path d="M0.5 4H3L6.5 0.5V11.5L3 8H0.5Z" fill="#c8c8c8"/><path d="M8.5 3.5Q10 6 8.5 8.5M10.5 1.5Q13 6 10.5 10.5" stroke="#c8c8c8" stroke-width="1.2" fill="none"/></svg>
<svg style="left:575px;top:689px" width="13" height="13"><path d="M1.5 11.5L8 5" stroke="#aaa" stroke-width="1.8"/><path d="M7 3L10 0.5L12.5 3L10 6Z" fill="#ccc"/></svg>
<svg style="left:593px;top:692px" width="15" height="9"><path d="M0.5 4.5L4 0.5H14V8.5H4Z" fill="#c8c8c8"/><circle cx="5" cy="4.5" r="1.3" fill="#474747"/></svg>
<div class="t" style="left:649px;top:689px;color:#e8e8e8">Name</div>
<div class="a" style="left:494px;top:705px;width:444px;height:132px;background:#333333"></div>
<div class="a" style="left:494px;top:794px;width:442px;height:20px;background:#46404f;border-radius:0 3px 3px 0"></div>
<div class="a" style="left:940px;top:706px;width:10px;height:256px;background:#4f4f4f;border-radius:5px"></div>
<div class="a" style="left:496px;top:707px;width:18px;height:18px;background:#262626;border-radius:3px"></div>
<div class="a" style="left:515px;top:707px;width:18px;height:18px;background:#262626;border-radius:3px"></div>
<div class="a" style="left:534px;top:707px;width:18px;height:18px;background:#262626;border-radius:3px"></div>
<svg style="left:517px;top:711px" width="14" height="10"><path d="M0.5 5Q7 -2 13.5 5Q7 12 0.5 5Z" stroke="#c8c8c8" stroke-width="1.1" fill="none"/><circle cx="7" cy="5" r="2" fill="#c8c8c8"/></svg>
<div class="a" style="left:573px;top:708px;width:16px;height:16px;background:#bb8df8;border-radius:3px;box-shadow:0 0 0 1px #1a1a1a"></div>
<svg style="left:593px;top:712px" width="15" height="9"><path d="M0.5 4.5L4 0.5H14V8.5H4Z" fill="#cfcfcf"/><circle cx="5" cy="4.5" r="1.3" fill="#333"/></svg>
<div class="a" style="left:611px;top:708px;width:30px;height:16px;background:#2f2f2f;border-radius:3px"></div>
<svg style="left:615px;top:714px" width="9" height="5"><path d="M0.5 0.5L4.5 4.5L8.5 0.5" stroke="#888" fill="none"/></svg>
<svg style="left:647px;top:708px" width="16" height="16" viewBox="0 0 16 16"><rect x="1.5" y="1.5" width="13" height="13" stroke="#e8e8e8" stroke-width="1" fill="none"/><rect x="0" y="0" width="3" height="3" fill="#f0f0f0"/><rect x="13" y="0" width="3" height="3" fill="#f0f0f0"/><rect x="0" y="13" width="3" height="3" fill="#f0f0f0"/><rect x="13" y="13" width="3" height="3" fill="#f0f0f0"/><path d="M4 4H12V6.3H9.2V12H6.8V6.3H4Z" fill="#e8d660"/></svg>

<div class="t" style="left:667px;top:709px;color:#e8e8e8">Main</div>
<div class="a" style="left:898px;top:708px;width:21px;height:16px;background:#2a2a2a;border-radius:3px"></div>
<div class="a" style="left:908px;top:708px;width:1px;height:16px;background:#333"></div>
<div class="a" style="left:898px;top:708px;width:10px;height:16px;border:1px solid #b39a58;border-radius:2px"></div>
<svg style="left:900px;top:712px" width="7" height="8"><path d="M6.5 0.5H3.5L0.5 4L3.5 7.5H6.5Z" fill="#d8bf72"/></svg>
<svg style="left:910px;top:712px" width="7" height="8"><path d="M0.5 0.5H3.5L6.5 4L3.5 7.5H0.5Z" fill="#777"/></svg>
<div class="a" style="left:924px;top:711px;width:10px;height:10px;border:1.2px solid #888;border-radius:50%"></div>
<div class="a" style="left:496px;top:729px;width:18px;height:18px;background:#262626;border-radius:3px"></div>
<div class="a" style="left:515px;top:729px;width:18px;height:18px;background:#262626;border-radius:3px"></div>
<svg style="left:518px;top:732px" width="12" height="12"><circle cx="6" cy="6" r="5" stroke="#c8c8c8" stroke-width="1.1" fill="none"/><path d="M3 6L5.5 8.5L10.5 2.5" stroke="#c8c8c8" stroke-width="1.4" fill="none"/></svg>
<div class="a" style="left:573px;top:730px;width:16px;height:16px;background:#5b8de0;border-radius:3px;box-shadow:0 0 0 1px #1a1a1a"></div>
<svg style="left:593px;top:734px" width="15" height="9"><path d="M0.5 4.5L4 0.5H14V8.5H4Z" fill="#cfcfcf"/><circle cx="5" cy="4.5" r="1.3" fill="#333"/></svg>
<div class="a" style="left:629px;top:730px;width:32px;height:18px;background:#2c2c2c;border-radius:3px"></div>
<div class="a" style="left:643px;top:730px;width:1px;height:18px;background:#333"></div>
<svg style="left:632px;top:737px" width="9" height="5"><path d="M0.5 0.5L4.5 4.5L8.5 0.5" stroke="#888" fill="none"/></svg>
<div class="a" style="left:648px;top:735px;width:7px;height:7px;background:#ddd;border-radius:50%"></div>
<svg style="left:666px;top:730px" width="16" height="16"><path d="M2 5A7 7 0 0 1 14 5M2 11A7 7 0 0 0 14 11" stroke="#cfcfcf" stroke-width="1" fill="none"/><text x="1" y="10.5" font-size="8" font-family="Liberation Sans" fill="#8fc4ff">abc</text></svg>
<div class="t" style="left:686px;top:731px;color:#e8e8e8">String Manipulator [Cavalry Typing Te...</div>
<div class="a" style="left:898px;top:730px;width:21px;height:16px;background:#2a2a2a;border-radius:3px"></div>
<div class="a" style="left:908px;top:730px;width:1px;height:16px;background:#333"></div>
<svg style="left:900px;top:734px" width="7" height="8"><path d="M6.5 0.5H3.5L0.5 4L3.5 7.5H6.5Z" fill="#777"/></svg>
<svg style="left:910px;top:734px" width="7" height="8"><path d="M0.5 0.5H3.5L6.5 4L3.5 7.5H0.5Z" fill="#c44bd8"/></svg>
<div class="a" style="left:924px;top:733px;width:10px;height:10px;border:1.2px solid #888;border-radius:50%"></div>
<div class="a" style="left:653px;top:750px;width:1px;height:9px;border-left:1px dotted #ccc"></div>
<div class="a" style="left:653px;top:759px;width:9px;height:1px;border-top:1px dotted #ccc"></div>
<div class="t" style="left:666px;top:753px;color:#e8e8e8;font-size:11.6px">Resize String.Percentage</div>
<div class="a" style="left:840px;top:752px;width:94px;height:16px;background:#262626;border-radius:2px"></div>
<div class="t" style="left:843px;top:753px;color:#6a6a6a">%</div>
<div class="t" style="left:857px;top:753px;color:#e8e8e8">33.333</div>
<svg style="left:910px;top:755px" width="10" height="10"><path d="M5 0.5L9.5 5L5 9.5L0.5 5Z" fill="#cfcfcf"/></svg>
<div class="a" style="left:924px;top:752px;width:10px;height:16px;background:#2e2e2e"></div>
<svg style="left:926px;top:756px" width="7" height="8"><path d="M0.5 0.5H3.5L6.5 4L3.5 7.5H0.5Z" fill="#777"/></svg>
<div class="a" style="left:496px;top:773px;width:18px;height:18px;background:#262626;border-radius:3px"></div>
<div class="a" style="left:515px;top:773px;width:18px;height:18px;background:#262626;border-radius:3px"></div>
<div class="a" style="left:534px;top:773px;width:18px;height:18px;background:#262626;border-radius:3px"></div>
<div class="a" style="left:573px;top:774px;width:16px;height:16px;background:#bb8df8;border-radius:3px;box-shadow:0 0 0 1px #1a1a1a"></div>
<svg style="left:593px;top:778px" width="15" height="9"><path d="M0.5 4.5L4 0.5H14V8.5H4Z" fill="#cfcfcf"/><circle cx="5" cy="4.5" r="1.3" fill="#333"/></svg>
<div class="a" style="left:629px;top:774px;width:32px;height:16px;background:#2f2f2f;border-radius:3px"></div>
<svg style="left:633px;top:780px" width="9" height="5"><path d="M0.5 0.5L4.5 4.5L8.5 0.5" stroke="#888" fill="none"/></svg>
<svg style="left:666px;top:774px" width="16" height="16" viewBox="0 0 16 16"><rect x="1.5" y="1.5" width="13" height="13" stroke="#e8e8e8" stroke-width="1" fill="none"/><rect x="0" y="0" width="3" height="3" fill="#f0f0f0"/><rect x="13" y="0" width="3" height="3" fill="#f0f0f0"/><rect x="0" y="13" width="3" height="3" fill="#f0f0f0"/><rect x="13" y="13" width="3" height="3" fill="#f0f0f0"/><path d="M4 4H12V6.3H9.2V12H6.8V6.3H4Z" fill="#e8d660"/></svg>

<div class="t" style="left:686px;top:775px;color:#9a9a9a">Cavalry Typing Text</div>
<div class="a" style="left:898px;top:774px;width:21px;height:16px;background:#2a2a2a;border-radius:3px"></div>
<div class="a" style="left:908px;top:774px;width:1px;height:16px;background:#333"></div>
<svg style="left:900px;top:778px" width="7" height="8"><path d="M6.5 0.5H3.5L0.5 4L3.5 7.5H6.5Z" fill="#d8bf72"/></svg>
<svg style="left:910px;top:778px" width="7" height="8"><path d="M0.5 0.5H3.5L6.5 4L3.5 7.5H0.5Z" fill="#c44bd8"/></svg>
<div class="a" style="left:924px;top:777px;width:10px;height:10px;border:1.2px solid #888;border-radius:50%"></div>
<div class="a" style="left:496px;top:795px;width:18px;height:18px;background:#262626;border-radius:3px"></div>
<div class="a" style="left:515px;top:795px;width:18px;height:18px;background:#262626;border-radius:3px"></div>
<div class="a" style="left:534px;top:795px;width:18px;height:18px;background:#262626;border-radius:3px"></div>
<div class="a" style="left:573px;top:796px;width:16px;height:16px;background:#bb8df8;border-radius:3px;box-shadow:0 0 0 1px #1a1a1a"></div>
<svg style="left:593px;top:800px" width="15" height="9"><path d="M0.5 4.5L4 0.5H14V8.5H4Z" fill="#cfcfcf"/><circle cx="5" cy="4.5" r="1.3" fill="#333"/></svg>
<div class="a" style="left:648px;top:796px;width:32px;height:18px;background:#2c2c2c;border-radius:3px"></div>
<div class="a" style="left:662px;top:796px;width:1px;height:18px;background:#333"></div>
<svg style="left:651px;top:803px" width="9" height="5"><path d="M0.5 0.5L4.5 4.5L8.5 0.5" stroke="#888" fill="none"/></svg>
<div class="a" style="left:667px;top:801px;width:7px;height:7px;background:#ddd;border-radius:50%"></div>
<svg style="left:685px;top:796px" width="16" height="16" viewBox="0 0 16 16"><rect x="1.5" y="1.5" width="13" height="13" stroke="#e8e8e8" stroke-width="1" fill="none"/><rect x="0" y="0" width="3" height="3" fill="#f0f0f0"/><rect x="13" y="0" width="3" height="3" fill="#f0f0f0"/><rect x="0" y="13" width="3" height="3" fill="#f0f0f0"/><rect x="13" y="13" width="3" height="3" fill="#f0f0f0"/><path d="M4 4H12V6.3H9.2V12H6.8V6.3H4Z" fill="#e8d660"/></svg>

<div class="t" style="left:705px;top:797px;color:#9a9a9a">Cursor</div>
<div class="a" style="left:898px;top:796px;width:21px;height:16px;background:#2a2a2a;border-radius:3px"></div>
<div class="a" style="left:908px;top:796px;width:1px;height:16px;background:#333"></div>
<svg style="left:900px;top:800px" width="7" height="8"><path d="M6.5 0.5H3.5L0.5 4L3.5 7.5H6.5Z" fill="#777"/></svg>
<svg style="left:910px;top:800px" width="7" height="8"><path d="M0.5 0.5H3.5L6.5 4L3.5 7.5H0.5Z" fill="#c44bd8"/></svg>
<div class="a" style="left:924px;top:799px;width:10px;height:10px;border:1.2px solid #888;border-radius:50%"></div>
<div class="a" style="left:672px;top:816px;width:1px;height:9px;border-left:1px dotted #ccc"></div>
<div class="a" style="left:672px;top:825px;width:9px;height:1px;border-top:1px dotted #ccc"></div>
<div class="t" style="left:685px;top:819px;color:#e8e8e8">Fill.Alpha</div>
<div class="a" style="left:832px;top:812px;width:111px;height:27px;border:3px solid #bfe81c;background:#2a2a2a"></div>
<div class="a" style="left:840px;top:818px;width:94px;height:16px;background:#262626;border-radius:2px"></div>
<div class="t" style="left:843px;top:819px;color:#6a6a6a">%</div>
<div class="t" style="left:857px;top:819px;color:#e8e8e8">0.0</div>
<svg style="left:910px;top:821px" width="10" height="10"><path d="M5 0.5L9.5 5L5 9.5L0.5 5Z" fill="#2ecc71"/></svg>
<div class="a" style="left:924px;top:818px;width:10px;height:16px;background:#2e2e2e"></div>
<svg style="left:926px;top:822px" width="7" height="8"><path d="M0.5 0.5H3.5L6.5 4L3.5 7.5H0.5Z" fill="#777"/></svg>
<div class="a" style="left:952px;top:663px;width:4px;height:42px;background:#1e1e1e"></div><div class="a" style="left:952px;top:962px;width:4px;height:36px;background:#1e1e1e"></div>
<div class="a" style="left:954px;top:826px;width:1px;height:14px;border-left:1.5px dotted #888"></div>
<div class="a" style="left:494px;top:962px;width:458px;height:14px;background:#2a2a2a"></div>
<div class="a" style="left:495px;top:964px;width:442px;height:10px;background:#4f4f4f;border-radius:5px"></div>
<div class="a" style="left:494px;top:976px;width:458px;height:22px;background:#474747"></div>
<div class="a" style="left:497px;top:977px;width:20px;height:20px;background:#2e2e2e;border:1px solid #242424;border-radius:3px"></div>
<svg style="left:500px;top:983px" width="15" height="9"><path d="M0.5 4.5L4 0.5H14V8.5H4Z" fill="#cfcfcf"/><circle cx="5" cy="4.5" r="1.3" fill="#333"/></svg>
<div class="t" style="left:520px;top:980px;color:#e8e8e8">1 selected</div>
<div class="a" style="left:743px;top:977px;width:19px;height:20px;background:#2e2e2e;border:1px solid #242424;border-radius:3px"></div>
<div class="a" style="left:747px;top:981px;width:11px;height:11px;border:1.3px solid #ddd"></div>
<div class="a" style="left:751px;top:985px;width:3px;height:3px;background:#ddd"></div>
<div class="a" style="left:766px;top:978px;width:183px;height:18px;background:#5a5a5a;border-radius:3px"></div><div class="a" style="left:767px;top:979px;width:86px;height:16px;background:#2a2a2a;border-radius:3px"></div>
<svg style="left:772px;top:981px" width="12" height="12"><path d="M2 1.5H11M0.5 6H9M3 10.5H11" stroke="#2ecc71" stroke-width="2"/></svg>
<div class="t" style="left:789px;top:980px;color:#e8e8e8">Time Editor</div>
<svg style="left:861px;top:980px" width="14" height="14"><path d="M1.5 0.5V12.5H13.5M2 12L12 4" stroke="#aaa" stroke-width="1" fill="none"/></svg>
<div class="t" style="left:879px;top:980px;color:#e8e8e8">Graph Editor</div>
<div class="a" style="left:956px;top:663px;width:3px;height:335px;background:#1e1e1e"></div>
<div class="a" style="left:959px;top:663px;width:955px;height:24px;background:#232323"></div>
<div class="t" style="left:1154px;top:646px;color:#c4c4c4">Typing Text 01</div>
<svg style="left:1422px;top:649px" width="8" height="8"><path d="M0.5 0.5L7.5 7.5M7.5 0.5L0.5 7.5" stroke="#bbb" stroke-width="1"/></svg>
<div class="a" style="left:969px;top:648px;width:1px;height:11px;background:#bbb"></div>
<div class="a" style="left:1439px;top:643px;width:470px;height:20px;background:#474747;border-radius:4px 4px 0 0"></div>
<div class="t" style="left:1629px;top:646px;color:#e8e8e8">Typing Text 2</div>
<svg style="left:1891px;top:649px" width="8" height="8"><path d="M0.5 0.5L7.5 7.5M7.5 0.5L0.5 7.5" stroke="#bbb" stroke-width="1"/></svg>
<div class="a" style="left:967.3px;top:679px;width:1px;height:8px;background:#8a8a8a"></div>
<div class="t" style="left:937.8px;top:664px;width:60px;text-align:center;color:#e6e6e6;font-size:11.5px;-webkit-text-stroke:0.25px #e6e6e6">0</div>
<div class="a" style="left:982.9px;top:683px;width:1px;height:4px;background:#8a8a8a"></div>
<div class="a" style="left:998.5px;top:683px;width:1px;height:4px;background:#8a8a8a"></div>
<div class="a" style="left:1014.2px;top:683px;width:1px;height:4px;background:#8a8a8a"></div>
<div class="a" style="left:1029.8px;top:683px;width:1px;height:4px;background:#8a8a8a"></div>
<div class="a" style="left:1045.4px;top:679px;width:1px;height:8px;background:#8a8a8a"></div>
<div class="t" style="left:1015.9px;top:664px;width:60px;text-align:center;color:#e6e6e6;font-size:11.5px;-webkit-text-stroke:0.25px #e6e6e6">10</div>
<div class="a" style="left:1061.0px;top:683px;width:1px;height:4px;background:#8a8a8a"></div>
<div class="a" style="left:1076.6px;top:683px;width:1px;height:4px;background:#8a8a8a"></div>
<div class="a" style="left:1092.3px;top:683px;width:1px;height:4px;background:#8a8a8a"></div>
<div class="a" style="left:1107.9px;top:683px;width:1px;height:4px;background:#8a8a8a"></div>
<div class="a" style="left:1123.5px;top:679px;width:1px;height:8px;background:#8a8a8a"></div>
<div class="t" style="left:1094.0px;top:664px;width:60px;text-align:center;color:#e6e6e6;font-size:11.5px;-webkit-text-stroke:0.25px #e6e6e6">20</div>
<div class="a" style="left:1139.1px;top:683px;width:1px;height:4px;background:#8a8a8a"></div>
<div class="a" style="left:1154.7px;top:683px;width:1px;height:4px;background:#8a8a8a"></div>
<div class="a" style="left:1170.4px;top:683px;width:1px;height:4px;background:#8a8a8a"></div>
<div class="a" style="left:1186.0px;top:683px;width:1px;height:4px;background:#8a8a8a"></div>
<div class="a" style="left:1201.6px;top:679px;width:1px;height:8px;background:#8a8a8a"></div>
<div class="t" style="left:1172.1px;top:664px;width:60px;text-align:center;color:#e6e6e6;font-size:11.5px;-webkit-text-stroke:0.25px #e6e6e6">30</div>
<div class="a" style="left:1217.2px;top:683px;width:1px;height:4px;background:#8a8a8a"></div>
<div class="a" style="left:1232.8px;top:683px;width:1px;height:4px;background:#8a8a8a"></div>
<div class="a" style="left:1248.5px;top:683px;width:1px;height:4px;background:#8a8a8a"></div>
<div class="a" style="left:1264.1px;top:683px;width:1px;height:4px;background:#8a8a8a"></div>
<div class="a" style="left:1279.7px;top:679px;width:1px;height:8px;background:#8a8a8a"></div>
<div class="t" style="left:1250.2px;top:664px;width:60px;text-align:center;color:#e6e6e6;font-size:11.5px;-webkit-text-stroke:0.25px #e6e6e6">40</div>
<div class="a" style="left:1295.3px;top:683px;width:1px;height:4px;background:#8a8a8a"></div>
<div class="a" style="left:1310.9px;top:683px;width:1px;height:4px;background:#8a8a8a"></div>
<div class="a" style="left:1326.6px;top:683px;width:1px;height:4px;background:#8a8a8a"></div>
<div class="a" style="left:1342.2px;top:683px;width:1px;height:4px;background:#8a8a8a"></div>
<div class="a" style="left:1357.8px;top:679px;width:1px;height:8px;background:#8a8a8a"></div>
<div class="t" style="left:1328.3px;top:664px;width:60px;text-align:center;color:#e6e6e6;font-size:11.5px;-webkit-text-stroke:0.25px #e6e6e6">50</div>
<div class="a" style="left:1373.4px;top:683px;width:1px;height:4px;background:#8a8a8a"></div>
<div class="a" style="left:1389.0px;top:683px;width:1px;height:4px;background:#8a8a8a"></div>
<div class="a" style="left:1404.7px;top:683px;width:1px;height:4px;background:#8a8a8a"></div>
<div class="a" style="left:1420.3px;top:683px;width:1px;height:4px;background:#8a8a8a"></div>
<div class="a" style="left:1435.9px;top:679px;width:1px;height:8px;background:#8a8a8a"></div>
<div class="t" style="left:1406.4px;top:664px;width:60px;text-align:center;color:#e6e6e6;font-size:11.5px;-webkit-text-stroke:0.25px #e6e6e6">60</div>
<div class="a" style="left:1451.5px;top:683px;width:1px;height:4px;background:#8a8a8a"></div>
<div class="a" style="left:1467.1px;top:683px;width:1px;height:4px;background:#8a8a8a"></div>
<div class="a" style="left:1482.8px;top:683px;width:1px;height:4px;background:#8a8a8a"></div>
<div class="a" style="left:1498.4px;top:683px;width:1px;height:4px;background:#8a8a8a"></div>
<div class="a" style="left:1514.0px;top:679px;width:1px;height:8px;background:#8a8a8a"></div>
<div class="t" style="left:1484.5px;top:664px;width:60px;text-align:center;color:#e6e6e6;font-size:11.5px;-webkit-text-stroke:0.25px #e6e6e6">70</div>
<div class="a" style="left:1529.6px;top:683px;width:1px;height:4px;background:#8a8a8a"></div>
<div class="a" style="left:1545.2px;top:683px;width:1px;height:4px;background:#8a8a8a"></div>
<div class="a" style="left:1560.9px;top:683px;width:1px;height:4px;background:#8a8a8a"></div>
<div class="a" style="left:1576.5px;top:683px;width:1px;height:4px;background:#8a8a8a"></div>
<div class="a" style="left:1592.1px;top:679px;width:1px;height:8px;background:#8a8a8a"></div>
<div class="t" style="left:1562.6px;top:664px;width:60px;text-align:center;color:#e6e6e6;font-size:11.5px;-webkit-text-stroke:0.25px #e6e6e6">80</div>
<div class="a" style="left:1607.7px;top:683px;width:1px;height:4px;background:#8a8a8a"></div>
<div class="a" style="left:1623.3px;top:683px;width:1px;height:4px;background:#8a8a8a"></div>
<div class="a" style="left:1639.0px;top:683px;width:1px;height:4px;background:#8a8a8a"></div>
<div class="a" style="left:1654.6px;top:683px;width:1px;height:4px;background:#8a8a8a"></div>
<div class="a" style="left:1670.2px;top:679px;width:1px;height:8px;background:#8a8a8a"></div>
<div class="t" style="left:1640.7px;top:664px;width:60px;text-align:center;color:#e6e6e6;font-size:11.5px;-webkit-text-stroke:0.25px #e6e6e6">90</div>
<div class="a" style="left:1685.8px;top:683px;width:1px;height:4px;background:#8a8a8a"></div>
<div class="a" style="left:1701.4px;top:683px;width:1px;height:4px;background:#8a8a8a"></div>
<div class="a" style="left:1717.1px;top:683px;width:1px;height:4px;background:#8a8a8a"></div>
<div class="a" style="left:1732.7px;top:683px;width:1px;height:4px;background:#8a8a8a"></div>
<div class="a" style="left:1748.3px;top:679px;width:1px;height:8px;background:#8a8a8a"></div>
<div class="t" style="left:1718.8px;top:664px;width:60px;text-align:center;color:#e6e6e6;font-size:11.5px;-webkit-text-stroke:0.25px #e6e6e6">100</div>
<div class="a" style="left:1763.9px;top:683px;width:1px;height:4px;background:#8a8a8a"></div>
<div class="a" style="left:1779.5px;top:683px;width:1px;height:4px;background:#8a8a8a"></div>
<div class="a" style="left:1795.2px;top:683px;width:1px;height:4px;background:#8a8a8a"></div>
<div class="a" style="left:1810.8px;top:683px;width:1px;height:4px;background:#8a8a8a"></div>
<div class="a" style="left:1826.4px;top:679px;width:1px;height:8px;background:#8a8a8a"></div>
<div class="t" style="left:1796.9px;top:664px;width:60px;text-align:center;color:#e6e6e6;font-size:11.5px;-webkit-text-stroke:0.25px #e6e6e6">110</div>
<div class="a" style="left:1842.0px;top:683px;width:1px;height:4px;background:#8a8a8a"></div>
<div class="a" style="left:1857.6px;top:683px;width:1px;height:4px;background:#8a8a8a"></div>
<div class="a" style="left:1873.3px;top:683px;width:1px;height:4px;background:#8a8a8a"></div>
<div class="a" style="left:1888.9px;top:683px;width:1px;height:4px;background:#8a8a8a"></div>
<div class="a" style="left:1904.5px;top:679px;width:1px;height:8px;background:#8a8a8a"></div>
<div class="t" style="left:1875.0px;top:664px;width:60px;text-align:center;color:#e6e6e6;font-size:11.5px;-webkit-text-stroke:0.25px #e6e6e6">120</div>
<div class="a" style="left:959px;top:687px;width:955px;height:17px;background:#2a2a2a"></div>
<div class="a" style="left:968px;top:687px;width:946px;height:16px;background:#474747"></div>
<div class="a" style="left:963px;top:686px;width:5px;height:18px;background:#6fcfae;border-radius:2px 0 0 2px"></div>
<div class="a" style="left:1905px;top:686px;width:5px;height:18px;background:#6fcfae;border-radius:2px"></div>
<div class="a" style="left:956px;top:704px;width:12px;height:258px;background:#1f1f1f"></div><div class="a" style="left:959px;top:705px;width:9px;height:20px;background:#262626"></div>
<div class="a" style="left:968px;top:706.5px;width:946px;height:18px;background:#b88ef8;border-radius:3px 0 0 3px"></div>
<div class="t" style="left:976px;top:708px;color:#fafafa">Main</div>
<div class="a" style="left:968px;top:728.5px;width:946px;height:18px;background:repeating-linear-gradient(-45deg,#74a4ff 0px,#6c98f0 2.2px,#6690e8 3px,#6690e8 12.8px,#70a0fa 12.8px,#5c88dc 15px,#5a84d8 25.6px);border-radius:3px 0 0 3px"></div>
<div class="t" style="left:976px;top:730px;color:#fafafa">String Manipulator [Cavalry Typing Text]</div>
<div class="a" style="left:971px;top:757px;width:465px;height:2px;background:#5b8de0"></div>
<svg style="left:963px;top:753px" width="10" height="10"><path d="M5 0.5L9.5 5L5 9.5L0.5 5Z" fill="#cfcfcf"/></svg>
<svg style="left:1431px;top:753px" width="10" height="10"><path d="M5 0.5L9.5 5L5 9.5L0.5 5Z" fill="#cfcfcf"/></svg>
<div class="a" style="left:968px;top:772.5px;width:946px;height:18px;background:#b88ef8;border-radius:3px 0 0 3px"></div>
<div class="t" style="left:976px;top:774px;color:#fafafa">Cavalry Typing Text</div>
<div class="a" style="left:968px;top:794px;width:946px;height:19px;background-color:#a683ee;background-image:radial-gradient(circle,#e6cbff 0.9px,transparent 1.4px);background-size:3px 3px;border:1px solid #f0e8f8;border-right:none;border-radius:3px 0 0 3px"></div>
<div class="t" style="left:976px;top:796px;color:#fff;-webkit-text-stroke:0.3px #fff">Cursor</div>
<div class="a" style="left:971px;top:823px;width:153px;height:2px;background:#b88ef8"></div>
<svg style="left:963.0px;top:819px" width="10" height="10"><path d="M5 0.5L9.5 5L5 9.5L0.5 5Z" fill="#cfcfcf"/></svg>
<svg style="left:1041.1px;top:819px" width="10" height="10"><path d="M5 0.5L9.5 5L5 9.5L0.5 5Z" fill="#cfcfcf"/></svg>
<svg style="left:1119.2px;top:819px" width="10" height="10"><path d="M5 0.5L9.5 5L5 9.5L0.5 5Z" fill="#cfcfcf"/></svg>
<div class="a" style="left:1906px;top:706px;width:8px;height:108px;background:rgba(40,30,60,0.25)"></div>
<svg style="left:1116px;top:677px" width="17" height="10"><path d="M0.5 0.5H16.5V3L8.5 9.5L0.5 3Z" fill="#6fcfae"/></svg>
<div class="a" style="left:1124px;top:686px;width:1px;height:276px;background:#6fcfae"></div>
<div class="a" style="left:956px;top:962px;width:958px;height:14px;background:#2c2c2c"></div>
<div class="a" style="left:986px;top:964px;width:840px;height:10px;background:#4f4f4f;border-radius:5px"></div>
<div class="a" style="left:959px;top:976px;width:955px;height:22px;background:#474747"></div>
<div class="a" style="left:963px;top:979px;width:17px;height:17px;background:#2e2e2e;border:1px solid #242424;border-radius:3px"></div>
<svg style="left:966px;top:982px" width="12" height="11"><path d="M0.5 1H11.5M0.5 5H11.5M0.5 9H6" stroke="#ddd" stroke-width="1.4"/><path d="M7 10L9 7V10Z" fill="#5fd0a8"/></svg>
<div class="a" style="left:983px;top:979px;width:150px;height:16px;background:#2a2a2a;border-radius:2px"></div>
<div class="t" style="left:985px;top:980px;color:#e8e8e8">Default Keyframe Layer</div>
<div class="a" style="left:1139px;top:979px;width:70px;height:16px;background:#2a2a2a;border-radius:2px"></div>
<div class="t" style="left:1143px;top:980px;color:#555">F</div>
<div class="t" style="left:1157px;top:980px;color:#e8e8e8">-</div>
<div class="t" style="left:1215px;top:980px;color:#e8e8e8">Align:</div>
<div class="a" style="left:1251px;top:978px;width:54px;height:18px;background:#2c2c2c;border:1px solid #262626;border-radius:3px"></div>
<div class="a" style="left:1269px;top:979px;width:1px;height:16px;background:#3c3c3c"></div><div class="a" style="left:1287px;top:979px;width:1px;height:16px;background:#3c3c3c"></div>
<svg style="left:1254px;top:981px" width="12" height="12"><path d="M0.7 0V12" stroke="#ddd"/><path d="M3 4H10M3 8H7" stroke="#ddd" stroke-width="1.5"/><circle cx="3.5" cy="4" r="1" fill="#5fd0a8"/></svg>
<svg style="left:1272px;top:981px" width="12" height="12"><path d="M6 0V12" stroke="#ddd" stroke-dasharray="1.5 1"/><path d="M2 4H10M3 8H9" stroke="#ddd" stroke-width="1.5"/></svg>
<svg style="left:1290px;top:981px" width="12" height="12"><path d="M11.3 0V12" stroke="#ddd"/><path d="M2 4H9M5 8H9" stroke="#ddd" stroke-width="1.5"/></svg>
<div class="a" style="left:1309px;top:978px;width:17px;height:18px;background:#2e2e2e;border:1px solid #242424;border-radius:3px"></div>
<div class="a" style="left:1312px;top:981px;width:11px;height:12px;border:1px dashed #ccc"></div><div class="a" style="left:1316.5px;top:985.5px;width:2px;height:2px;background:#ddd"></div>
<div class="a" style="left:1329px;top:977px;width:31px;height:20px;background:#2c2c2c;border:1px solid #262626;border-radius:3px"></div>
<div class="a" style="left:1347px;top:978px;width:1px;height:18px;background:#3c3c3c"></div>
<svg style="left:1331px;top:979px" width="15" height="15"><g transform="rotate(-45 7.5 7.5)"><path d="M4 12V7.5A3.5 3.5 0 0 1 11 7.5V12" stroke="#ccc" stroke-width="2.2" fill="none" stroke-linecap="round"/></g></svg>
<svg style="left:1351px;top:984px" width="6" height="7"><path d="M0.6 0.6V6.4L5.4 3.5Z" stroke="#8a8a8a" fill="none"/></svg>
<div class="a" style="left:1364px;top:977px;width:31px;height:20px;background:#2c2c2c;border:1px solid #262626;border-radius:3px"></div>
<div class="a" style="left:1382px;top:978px;width:1px;height:18px;background:#3c3c3c"></div>
<svg style="left:1367px;top:981px" width="13" height="12"><path d="M0 6H13M4 2V10M6.5 3V9M9 1V11" stroke="#ccc" stroke-width="1"/></svg>
<svg style="left:1386px;top:984px" width="6" height="7"><path d="M0.6 0.6V6.4L5.4 3.5Z" stroke="#8a8a8a" fill="none"/></svg>
<svg style="left:1743px;top:981px" width="15" height="15"><circle cx="6.5" cy="6.5" r="5.5" stroke="#ccc" stroke-width="1.1" fill="none"/><path d="M3.5 6.5H9.5" stroke="#ccc" stroke-width="1.1"/><path d="M10.5 10.5L13.5 13.5" stroke="#ccc" stroke-width="1.6"/></svg>
<div class="a" style="left:1762px;top:985px;width:120px;height:4px;background:#3a3a3a;border-radius:2px"></div>
<div class="a" style="left:1762px;top:985px;width:62px;height:4px;background:#e8e8e8;border-radius:2px"></div>
<div class="a" style="left:1818px;top:981px;width:12px;height:12px;background:#6fcfae;border:1px solid #4f9f86;border-radius:50%"></div>
<div class="a" style="left:1822px;top:985px;width:4px;height:4px;background:#56a98f;border-radius:50%"></div>
<svg style="left:1886px;top:981px" width="15" height="15"><circle cx="6.5" cy="6.5" r="5.5" stroke="#ccc" stroke-width="1.1" fill="none"/><path d="M3.5 6.5H9.5M6.5 3.5V9.5" stroke="#ccc" stroke-width="1.1"/><path d="M10.5 10.5L13.5 13.5" stroke="#ccc" stroke-width="1.6"/></svg>
<div class="a" style="left:488px;top:998px;width:1426px;height:6px;background:#141414"></div><div class="a" style="left:488px;top:1026px;width:1426px;height:4px;background:#1f1f1f"></div><div class="a" style="left:494px;top:1004px;width:1420px;height:22px;background:#3b3b3b"></div>
<div class="a" style="left:498px;top:1010px;width:2px;height:2px;background:#888;box-shadow:0 4px #888,0 8px #888"></div>
<div class="a" style="left:507px;top:1006px;width:17px;height:18px;background:#2c2c2c;border:1px solid #242424;border-radius:3px"></div>
<svg style="left:508px;top:1007px" width="16" height="17"><path d="M1.5 1.5H13.5V11.5H11L13 14.5L8.5 11.5H1.5Z" fill="#e6e6e6"/><path d="M3.5 4H5M6.5 4H11.5M3.5 6.5H5M6.5 6.5H11.5M3.5 9H5M6.5 9H11.5" stroke="#333" stroke-width="1.1"/><path d="M13 16L15.5 13.5V16Z" fill="#5fd0a8"/></svg>
<div class="a" style="left:528px;top:1008px;width:18px;height:14px;background:#2ecc71;border-radius:2px"></div>
<div class="t" style="left:533px;top:1008px;color:#111;font-size:11px">7</div>
<div class="a" style="left:554px;top:1012px;width:6px;height:6px;background:#2ecc71;border-radius:50%"></div>
<div class="t" style="left:565px;top:1008px;color:#e8e8e8;font-size:11.4px">Save reminder: 10 minutes since your last save.</div>
<div class="t" style="left:1360px;top:1008px;color:#e0e0e0;font-style:italic;font-size:11px;letter-spacing:-0.25px">Click to see next message</div>
<div class="a" style="left:1488px;top:1006px;width:80px;height:18px;background:#d4b96b;border-radius:2px"></div>
<div class="t" style="left:1493px;top:1008px;color:#1a1a1a;font-size:11.5px">Feedback</div>
<div class="a" style="left:1550px;top:1009px;width:10px;height:12px;background:#f0f0f0;border-radius:1px"></div><svg style="left:1552px;top:1011px" width="9" height="9"><path d="M1 8L8 1" stroke="#e06a3a" stroke-width="2"/></svg>
<div class="a" style="left:1571px;top:1006px;width:109px;height:18px;background:#2ecc71;border-radius:2px"></div>
<div class="t" style="left:1576px;top:1008px;color:#1a1a1a;font-size:11.5px">Upgrade to Pro</div>
<svg style="left:1659px;top:1010px" width="16" height="11"><ellipse cx="4.5" cy="6" rx="3.8" ry="4.5" fill="#f0b830"/><ellipse cx="11.5" cy="6" rx="3.8" ry="4.5" fill="#f0b830"/></svg>
<div class="a" style="left:1683px;top:1006px;width:119px;height:18px;background:#b88ef8;border-radius:2px"></div>
<div class="t" style="left:1688px;top:1008px;color:#1a1a1a;font-size:11.5px">Update Available</div>
<div class="a" style="left:1781px;top:1008px;width:14px;height:14px;background:#f0c040;border-radius:50%"></div><div class="a" style="left:1783px;top:1010px;width:10px;height:5px;background:#b060e0;border-radius:2px"></div>
<div class="a" style="left:1805px;top:1006px;width:106px;height:18px;background:#3aaaf0;border-radius:2px"></div>
<div class="t" style="left:1810px;top:1008px;color:#1a1a1a;font-size:11.5px">Tips and Tricks</div>
<svg style="left:1889px;top:1008px" width="14" height="14"><path d="M13 1Q8 1 4 6L8 10Q13 6 13 1Z" fill="#eee"/><path d="M4 6L1 7L3 9ZM8 10L7 13L5 11Z" fill="#e04040"/><circle cx="9.5" cy="4.5" r="1.2" fill="#3aaaf0"/></svg>
<div class="a" style="left:1914px;top:619px;width:6px;height:411px;background:#1f1f1f"></div>
</body></html>
